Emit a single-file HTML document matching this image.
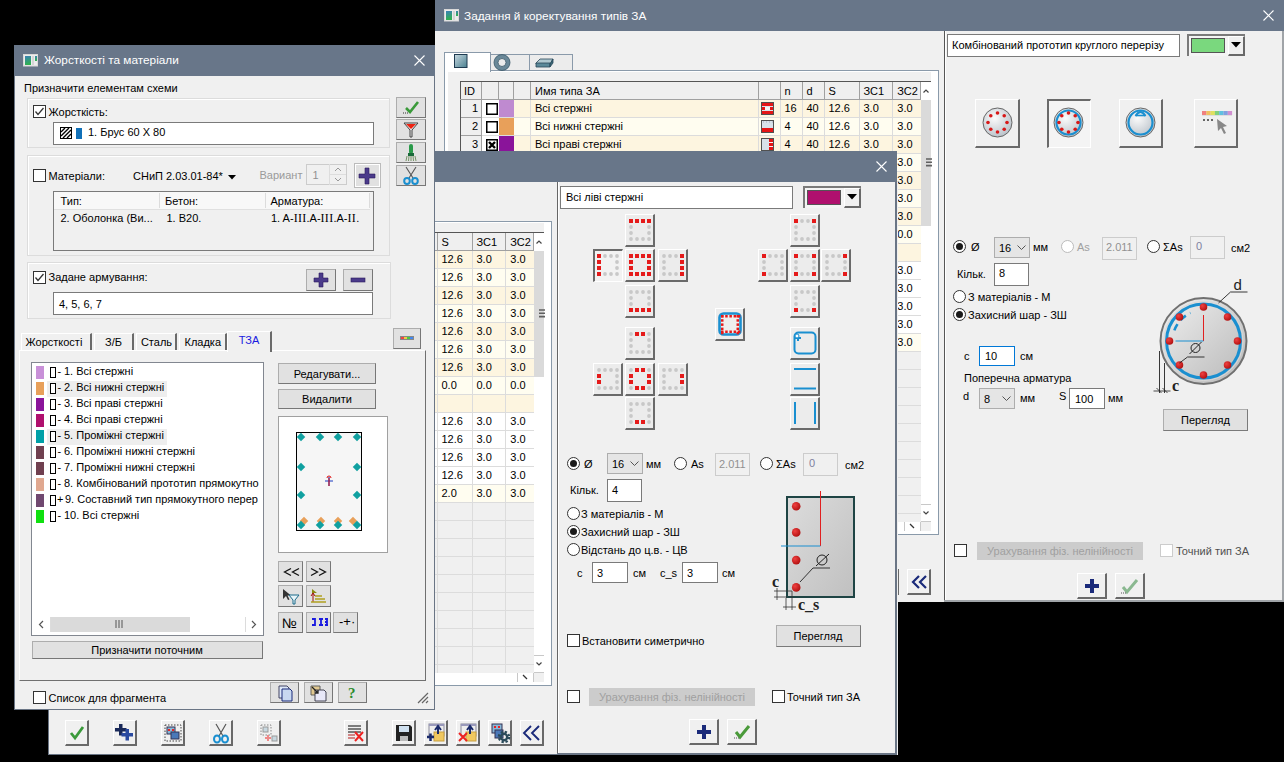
<!DOCTYPE html><html><head><meta charset="utf-8"><style>
html,body{margin:0;padding:0;}
body{width:1284px;height:762px;background:#000;position:relative;overflow:hidden;font-family:"Liberation Sans",sans-serif;}
div{position:absolute;box-sizing:content-box;}
.t{white-space:pre;}
svg{overflow:visible}
</style></head><body>
<div style="left:435px;top:0px;width:849px;height:602px;background:#f0f0f0"></div>
<div style="left:435px;top:0px;width:849px;height:31px;background:#687689"></div>
<svg style="position:absolute;left:444px;top:9px;" width="15" height="13" viewBox="0 0 15 13"><defs><linearGradient id="ig" x1="0" y1="0" x2="0.2" y2="1"><stop offset="0" stop-color="#3a80b8"/><stop offset="1" stop-color="#30b050"/></linearGradient></defs><rect x="0.5" y="0.5" width="14" height="11.5" fill="#ececec" stroke="#d8d8d8"/><rect x="2" y="2" width="6" height="9" fill="url(#ig)"/><rect x="9" y="2" width="2" height="9" fill="#d4d4d4"/><rect x="12" y="2" width="2" height="5" fill="url(#ig)"/></svg>
<div class="t" style="left:464px;top:10.81px;font-size:11.8px;line-height:11.8px;color:#fff;">Задання й коректування типів ЗА</div>
<svg style="position:absolute;left:1262.5px;top:10.0px;" width="11" height="11" viewBox="0 0 11 11"><path d="M0.5 0.5L10.5 10.5M10.5 0.5L0.5 10.5" stroke="#fff" stroke-width="1.1"/></svg>
<div style="left:490px;top:54px;width:38px;height:16px;background:#ececec;border:1px solid #8a9aaa;border-bottom:none"></div>
<div style="left:529px;top:54px;width:42px;height:16px;background:#ececec;border:1px solid #8a9aaa;border-bottom:none"></div>
<div style="left:444px;top:70px;width:493px;height:463px;background:#fff;border:1px solid #8a9aaa"></div>
<div style="left:444px;top:52px;width:45px;height:19px;background:#fff;border:1px solid #8a9aaa;border-bottom:none"></div>
<svg style="position:absolute;left:454px;top:54px;" width="14" height="14" viewBox="0 0 14 14"><defs><linearGradient id="tg1" x1="0" y1="0" x2="1" y2="1"><stop offset="0" stop-color="#c8d8e0"/><stop offset="1" stop-color="#4a8090"/></linearGradient></defs><rect x="0.5" y="0.5" width="12.5" height="13" fill="url(#tg1)" stroke="#1e3a50"/></svg>
<svg style="position:absolute;left:494px;top:54px;" width="17" height="17" viewBox="0 0 17 17"><circle cx="8" cy="8.5" r="6" fill="none" stroke="#6a8898" stroke-width="4"/><circle cx="8" cy="8.5" r="8" fill="none" stroke="#3a5868" stroke-width="0.8"/><circle cx="8" cy="8.5" r="4" fill="none" stroke="#3a5868" stroke-width="0.8"/></svg>
<svg style="position:absolute;left:535px;top:57px;" width="19" height="12" viewBox="0 0 19 12"><path d="M1 6L5 2H18L15 7H1Z" fill="#b0c8d0" stroke="#2a4858" stroke-width="0.8"/><path d="M1 6H15V10H1Z" fill="#5a8898" stroke="#2a4858" stroke-width="0.8"/><path d="M15 7L18 2V6L15 10Z" fill="#3a6878" stroke="#2a4858" stroke-width="0.8"/></svg>
<div style="left:448px;top:72px;width:483px;height:459px;background:#f0f0f0"></div>
<div style="left:460px;top:81px;width:471px;height:1px;background:#555"></div>
<div style="left:460px;top:81px;width:1px;height:441px;background:#555"></div>
<div style="left:461px;top:82px;width:20px;height:17px;background:#efefef;border-right:1px solid #a0a0a0"></div>
<div style="left:482px;top:82px;width:16px;height:17px;background:#efefef;border-right:1px solid #a0a0a0"></div>
<div style="left:499px;top:82px;width:14px;height:17px;background:#efefef;border-right:1px solid #a0a0a0"></div>
<div style="left:514px;top:82px;width:16px;height:17px;background:#efefef;border-right:1px solid #a0a0a0"></div>
<div style="left:531px;top:82px;width:227px;height:17px;background:#efefef;border-right:1px solid #a0a0a0"></div>
<div style="left:759px;top:82px;width:20.5px;height:17px;background:#efefef;border-right:1px solid #a0a0a0"></div>
<div style="left:780.5px;top:82px;width:21.0px;height:17px;background:#efefef;border-right:1px solid #a0a0a0"></div>
<div style="left:802.5px;top:82px;width:21.0px;height:17px;background:#efefef;border-right:1px solid #a0a0a0"></div>
<div style="left:824.5px;top:82px;width:34.0px;height:17px;background:#efefef;border-right:1px solid #a0a0a0"></div>
<div style="left:859.5px;top:82px;width:32.799999999999955px;height:17px;background:#efefef;border-right:1px solid #a0a0a0"></div>
<div style="left:893.3px;top:82px;width:27.100000000000023px;height:17px;background:#efefef;border-right:1px solid #a0a0a0"></div>
<div style="left:460px;top:99px;width:461.4px;height:1px;background:#a0a0a0"></div>
<div style="left:461px;top:100px;width:20px;height:17px;background:#efefef;border-right:1px solid #a0a0a0;border-bottom:1px solid #a0a0a0"></div>
<div style="left:482px;top:100px;width:17px;height:18px;background:#fff"></div>
<div style="left:499px;top:100px;width:15px;height:17px;background:#bf8ad0"></div>
<div style="left:514px;top:100px;width:407.4px;height:17px;background:#fdf5e0"></div>
<div style="left:482px;top:117px;width:439.4px;height:1px;background:#dcdcdc"></div>
<div style="left:530px;top:100px;width:1px;height:18px;background:#dcdcdc"></div>
<div style="left:758px;top:100px;width:1px;height:18px;background:#dcdcdc"></div>
<div style="left:779.5px;top:100px;width:1px;height:18px;background:#dcdcdc"></div>
<div style="left:801.5px;top:100px;width:1px;height:18px;background:#dcdcdc"></div>
<div style="left:823.5px;top:100px;width:1px;height:18px;background:#dcdcdc"></div>
<div style="left:858.5px;top:100px;width:1px;height:18px;background:#dcdcdc"></div>
<div style="left:892.3px;top:100px;width:1px;height:18px;background:#dcdcdc"></div>
<div class="t" style="left:278px;width:200px;text-align:right;top:102.89px;font-size:11px;line-height:11px;color:#000;">1</div>
<svg style="position:absolute;left:486px;top:103px;" width="12" height="12" viewBox="0 0 12 12"><rect x="0.75" y="0.75" width="10.5" height="10.5" fill="#fff" stroke="#000" stroke-width="1.5"/></svg>
<div class="t" style="left:535px;top:102.89px;font-size:11px;line-height:11px;color:#000;">Всі стержні</div>
<svg style="position:absolute;left:761px;top:102px;" width="13" height="13" viewBox="0 0 13 13"><rect x="0.5" y="0.5" width="12" height="12" fill="#d8e2ea" stroke="#505050"/><rect x="1" y="1" width="11" height="3" fill="#e51515"/><rect x="1" y="9" width="11" height="3" fill="#e51515"/><rect x="1" y="5" width="3" height="3" fill="#e51515"/><rect x="9" y="5" width="3" height="3" fill="#e51515"/><rect x="4" y="5" width="5" height="3" fill="#f4f4f4"/></svg>
<div class="t" style="left:784.5px;top:102.89px;font-size:11px;line-height:11px;color:#000;">16</div>
<div class="t" style="left:806.5px;top:102.89px;font-size:11px;line-height:11px;color:#000;">40</div>
<div class="t" style="left:828.5px;top:102.89px;font-size:11px;line-height:11px;color:#000;">12.6</div>
<div class="t" style="left:863.5px;top:102.89px;font-size:11px;line-height:11px;color:#000;">3.0</div>
<div class="t" style="left:897.3px;top:102.89px;font-size:11px;line-height:11px;color:#000;">3.0</div>
<div style="left:461px;top:118px;width:20px;height:17px;background:#efefef;border-right:1px solid #a0a0a0;border-bottom:1px solid #a0a0a0"></div>
<div style="left:482px;top:118px;width:17px;height:18px;background:#fff"></div>
<div style="left:499px;top:118px;width:15px;height:17px;background:#e8a05a"></div>
<div style="left:514px;top:118px;width:407.4px;height:17px;background:#fffdf0"></div>
<div style="left:482px;top:135px;width:439.4px;height:1px;background:#dcdcdc"></div>
<div style="left:530px;top:118px;width:1px;height:18px;background:#dcdcdc"></div>
<div style="left:758px;top:118px;width:1px;height:18px;background:#dcdcdc"></div>
<div style="left:779.5px;top:118px;width:1px;height:18px;background:#dcdcdc"></div>
<div style="left:801.5px;top:118px;width:1px;height:18px;background:#dcdcdc"></div>
<div style="left:823.5px;top:118px;width:1px;height:18px;background:#dcdcdc"></div>
<div style="left:858.5px;top:118px;width:1px;height:18px;background:#dcdcdc"></div>
<div style="left:892.3px;top:118px;width:1px;height:18px;background:#dcdcdc"></div>
<div class="t" style="left:278px;width:200px;text-align:right;top:120.89px;font-size:11px;line-height:11px;color:#000;">2</div>
<svg style="position:absolute;left:486px;top:121px;" width="12" height="12" viewBox="0 0 12 12"><rect x="0.75" y="0.75" width="10.5" height="10.5" fill="#fff" stroke="#000" stroke-width="1.5"/></svg>
<div class="t" style="left:535px;top:120.89px;font-size:11px;line-height:11px;color:#000;">Всі нижні стержні</div>
<svg style="position:absolute;left:761px;top:120px;" width="13" height="13" viewBox="0 0 13 13"><rect x="0.5" y="0.5" width="12" height="12" fill="#d8e2ea" stroke="#505050"/><rect x="1" y="8" width="11" height="4" fill="#e51515"/><path d="M2 2h1M5 2h1M8 2h1M11 2h1" stroke="#aab" stroke-width="1"/></svg>
<div class="t" style="left:784.5px;top:120.89px;font-size:11px;line-height:11px;color:#000;">4</div>
<div class="t" style="left:806.5px;top:120.89px;font-size:11px;line-height:11px;color:#000;">40</div>
<div class="t" style="left:828.5px;top:120.89px;font-size:11px;line-height:11px;color:#000;">12.6</div>
<div class="t" style="left:863.5px;top:120.89px;font-size:11px;line-height:11px;color:#000;">3.0</div>
<div class="t" style="left:897.3px;top:120.89px;font-size:11px;line-height:11px;color:#000;">3.0</div>
<div style="left:461px;top:136px;width:20px;height:17px;background:#efefef;border-right:1px solid #a0a0a0;border-bottom:1px solid #a0a0a0"></div>
<div style="left:482px;top:136px;width:17px;height:18px;background:#fff"></div>
<div style="left:499px;top:136px;width:15px;height:17px;background:#8a149a"></div>
<div style="left:514px;top:136px;width:407.4px;height:17px;background:#fdf5e0"></div>
<div style="left:482px;top:153px;width:439.4px;height:1px;background:#dcdcdc"></div>
<div style="left:530px;top:136px;width:1px;height:18px;background:#dcdcdc"></div>
<div style="left:758px;top:136px;width:1px;height:18px;background:#dcdcdc"></div>
<div style="left:779.5px;top:136px;width:1px;height:18px;background:#dcdcdc"></div>
<div style="left:801.5px;top:136px;width:1px;height:18px;background:#dcdcdc"></div>
<div style="left:823.5px;top:136px;width:1px;height:18px;background:#dcdcdc"></div>
<div style="left:858.5px;top:136px;width:1px;height:18px;background:#dcdcdc"></div>
<div style="left:892.3px;top:136px;width:1px;height:18px;background:#dcdcdc"></div>
<div class="t" style="left:278px;width:200px;text-align:right;top:138.89px;font-size:11px;line-height:11px;color:#000;">3</div>
<svg style="position:absolute;left:486px;top:139px;" width="12" height="12" viewBox="0 0 12 12"><rect x="0.75" y="0.75" width="10.5" height="10.5" fill="#fff" stroke="#000" stroke-width="1.5"/><path d="M3 3L9 9M9 3L3 9" stroke="#000" stroke-width="2.4"/></svg>
<div class="t" style="left:535px;top:138.89px;font-size:11px;line-height:11px;color:#000;">Всі праві стержні</div>
<svg style="position:absolute;left:761px;top:138px;" width="13" height="13" viewBox="0 0 13 13"><rect x="0.5" y="0.5" width="12" height="12" fill="#d8e2ea" stroke="#505050"/><rect x="8" y="1" width="4" height="11" fill="#e51515"/><rect x="8" y="4" width="4" height="1" fill="#f4f4f4"/><rect x="8" y="8" width="4" height="1" fill="#f4f4f4"/></svg>
<div class="t" style="left:784.5px;top:138.89px;font-size:11px;line-height:11px;color:#000;">4</div>
<div class="t" style="left:806.5px;top:138.89px;font-size:11px;line-height:11px;color:#000;">40</div>
<div class="t" style="left:828.5px;top:138.89px;font-size:11px;line-height:11px;color:#000;">12.6</div>
<div class="t" style="left:863.5px;top:138.89px;font-size:11px;line-height:11px;color:#000;">3.0</div>
<div class="t" style="left:897.3px;top:138.89px;font-size:11px;line-height:11px;color:#000;">3.0</div>
<div style="left:461px;top:154px;width:20px;height:17px;background:#efefef;border-right:1px solid #a0a0a0;border-bottom:1px solid #a0a0a0"></div>
<div style="left:482px;top:154px;width:17px;height:18px;background:#fff"></div>
<div style="left:499px;top:154px;width:15px;height:17px;background:#b0106e"></div>
<div style="left:514px;top:154px;width:407.4px;height:17px;background:#fffdf0"></div>
<div style="left:482px;top:171px;width:439.4px;height:1px;background:#dcdcdc"></div>
<div style="left:530px;top:154px;width:1px;height:18px;background:#dcdcdc"></div>
<div style="left:758px;top:154px;width:1px;height:18px;background:#dcdcdc"></div>
<div style="left:779.5px;top:154px;width:1px;height:18px;background:#dcdcdc"></div>
<div style="left:801.5px;top:154px;width:1px;height:18px;background:#dcdcdc"></div>
<div style="left:823.5px;top:154px;width:1px;height:18px;background:#dcdcdc"></div>
<div style="left:858.5px;top:154px;width:1px;height:18px;background:#dcdcdc"></div>
<div style="left:892.3px;top:154px;width:1px;height:18px;background:#dcdcdc"></div>
<div class="t" style="left:278px;width:200px;text-align:right;top:156.89px;font-size:11px;line-height:11px;color:#000;">4</div>
<svg style="position:absolute;left:486px;top:157px;" width="12" height="12" viewBox="0 0 12 12"><rect x="0.75" y="0.75" width="10.5" height="10.5" fill="#fff" stroke="#000" stroke-width="1.5"/></svg>
<div class="t" style="left:535px;top:156.89px;font-size:11px;line-height:11px;color:#000;">Всі ліві стержні</div>
<svg style="position:absolute;left:761px;top:156px;" width="13" height="13" viewBox="0 0 13 13"><rect x="0.5" y="0.5" width="12" height="12" fill="#d8e2ea" stroke="#505050"/><rect x="1" y="1" width="4" height="11" fill="#e51515"/></svg>
<div class="t" style="left:784.5px;top:156.89px;font-size:11px;line-height:11px;color:#000;">4</div>
<div class="t" style="left:806.5px;top:156.89px;font-size:11px;line-height:11px;color:#000;">40</div>
<div class="t" style="left:828.5px;top:156.89px;font-size:11px;line-height:11px;color:#000;">12.6</div>
<div class="t" style="left:863.5px;top:156.89px;font-size:11px;line-height:11px;color:#000;">3.0</div>
<div class="t" style="left:897.3px;top:156.89px;font-size:11px;line-height:11px;color:#000;">3.0</div>
<div style="left:461px;top:172px;width:20px;height:17px;background:#efefef;border-right:1px solid #a0a0a0;border-bottom:1px solid #a0a0a0"></div>
<div style="left:482px;top:172px;width:17px;height:18px;background:#fff"></div>
<div style="left:499px;top:172px;width:15px;height:17px;background:#00a0a0"></div>
<div style="left:514px;top:172px;width:407.4px;height:17px;background:#fdf5e0"></div>
<div style="left:482px;top:189px;width:439.4px;height:1px;background:#dcdcdc"></div>
<div style="left:530px;top:172px;width:1px;height:18px;background:#dcdcdc"></div>
<div style="left:758px;top:172px;width:1px;height:18px;background:#dcdcdc"></div>
<div style="left:779.5px;top:172px;width:1px;height:18px;background:#dcdcdc"></div>
<div style="left:801.5px;top:172px;width:1px;height:18px;background:#dcdcdc"></div>
<div style="left:823.5px;top:172px;width:1px;height:18px;background:#dcdcdc"></div>
<div style="left:858.5px;top:172px;width:1px;height:18px;background:#dcdcdc"></div>
<div style="left:892.3px;top:172px;width:1px;height:18px;background:#dcdcdc"></div>
<div class="t" style="left:278px;width:200px;text-align:right;top:174.89px;font-size:11px;line-height:11px;color:#000;">5</div>
<svg style="position:absolute;left:486px;top:175px;" width="12" height="12" viewBox="0 0 12 12"><rect x="0.75" y="0.75" width="10.5" height="10.5" fill="#fff" stroke="#000" stroke-width="1.5"/></svg>
<div class="t" style="left:535px;top:174.89px;font-size:11px;line-height:11px;color:#000;">Проміжні стержні</div>
<svg style="position:absolute;left:761px;top:174px;" width="13" height="13" viewBox="0 0 13 13"><rect x="0.5" y="0.5" width="12" height="12" fill="#d8e2ea" stroke="#505050"/><rect x="1" y="5" width="11" height="3" fill="#e51515"/></svg>
<div class="t" style="left:784.5px;top:174.89px;font-size:11px;line-height:11px;color:#000;">8</div>
<div class="t" style="left:806.5px;top:174.89px;font-size:11px;line-height:11px;color:#000;">40</div>
<div class="t" style="left:828.5px;top:174.89px;font-size:11px;line-height:11px;color:#000;">12.6</div>
<div class="t" style="left:863.5px;top:174.89px;font-size:11px;line-height:11px;color:#000;">3.0</div>
<div class="t" style="left:897.3px;top:174.89px;font-size:11px;line-height:11px;color:#000;">3.0</div>
<div style="left:461px;top:190px;width:20px;height:17px;background:#efefef;border-right:1px solid #a0a0a0;border-bottom:1px solid #a0a0a0"></div>
<div style="left:482px;top:190px;width:17px;height:18px;background:#fff"></div>
<div style="left:499px;top:190px;width:15px;height:17px;background:#703050"></div>
<div style="left:514px;top:190px;width:407.4px;height:17px;background:#fffdf0"></div>
<div style="left:482px;top:207px;width:439.4px;height:1px;background:#dcdcdc"></div>
<div style="left:530px;top:190px;width:1px;height:18px;background:#dcdcdc"></div>
<div style="left:758px;top:190px;width:1px;height:18px;background:#dcdcdc"></div>
<div style="left:779.5px;top:190px;width:1px;height:18px;background:#dcdcdc"></div>
<div style="left:801.5px;top:190px;width:1px;height:18px;background:#dcdcdc"></div>
<div style="left:823.5px;top:190px;width:1px;height:18px;background:#dcdcdc"></div>
<div style="left:858.5px;top:190px;width:1px;height:18px;background:#dcdcdc"></div>
<div style="left:892.3px;top:190px;width:1px;height:18px;background:#dcdcdc"></div>
<div class="t" style="left:278px;width:200px;text-align:right;top:192.89px;font-size:11px;line-height:11px;color:#000;">6</div>
<svg style="position:absolute;left:486px;top:193px;" width="12" height="12" viewBox="0 0 12 12"><rect x="0.75" y="0.75" width="10.5" height="10.5" fill="#fff" stroke="#000" stroke-width="1.5"/></svg>
<div class="t" style="left:535px;top:192.89px;font-size:11px;line-height:11px;color:#000;">Проміжні нижні стержні</div>
<svg style="position:absolute;left:761px;top:192px;" width="13" height="13" viewBox="0 0 13 13"><rect x="0.5" y="0.5" width="12" height="12" fill="#d8e2ea" stroke="#505050"/><rect x="1" y="8" width="11" height="4" fill="#e51515"/><path d="M2 2h1M5 2h1M8 2h1M11 2h1" stroke="#aab" stroke-width="1"/></svg>
<div class="t" style="left:784.5px;top:192.89px;font-size:11px;line-height:11px;color:#000;">2</div>
<div class="t" style="left:806.5px;top:192.89px;font-size:11px;line-height:11px;color:#000;">40</div>
<div class="t" style="left:828.5px;top:192.89px;font-size:11px;line-height:11px;color:#000;">12.6</div>
<div class="t" style="left:863.5px;top:192.89px;font-size:11px;line-height:11px;color:#000;">3.0</div>
<div class="t" style="left:897.3px;top:192.89px;font-size:11px;line-height:11px;color:#000;">3.0</div>
<div style="left:461px;top:208px;width:20px;height:17px;background:#efefef;border-right:1px solid #a0a0a0;border-bottom:1px solid #a0a0a0"></div>
<div style="left:482px;top:208px;width:17px;height:18px;background:#fff"></div>
<div style="left:499px;top:208px;width:15px;height:17px;background:#703050"></div>
<div style="left:514px;top:208px;width:407.4px;height:17px;background:#fdf5e0"></div>
<div style="left:482px;top:225px;width:439.4px;height:1px;background:#dcdcdc"></div>
<div style="left:530px;top:208px;width:1px;height:18px;background:#dcdcdc"></div>
<div style="left:758px;top:208px;width:1px;height:18px;background:#dcdcdc"></div>
<div style="left:779.5px;top:208px;width:1px;height:18px;background:#dcdcdc"></div>
<div style="left:801.5px;top:208px;width:1px;height:18px;background:#dcdcdc"></div>
<div style="left:823.5px;top:208px;width:1px;height:18px;background:#dcdcdc"></div>
<div style="left:858.5px;top:208px;width:1px;height:18px;background:#dcdcdc"></div>
<div style="left:892.3px;top:208px;width:1px;height:18px;background:#dcdcdc"></div>
<div class="t" style="left:278px;width:200px;text-align:right;top:210.89px;font-size:11px;line-height:11px;color:#000;">7</div>
<svg style="position:absolute;left:486px;top:211px;" width="12" height="12" viewBox="0 0 12 12"><rect x="0.75" y="0.75" width="10.5" height="10.5" fill="#fff" stroke="#000" stroke-width="1.5"/></svg>
<div class="t" style="left:535px;top:210.89px;font-size:11px;line-height:11px;color:#000;">Проміжні нижні стержні</div>
<svg style="position:absolute;left:761px;top:210px;" width="13" height="13" viewBox="0 0 13 13"><rect x="0.5" y="0.5" width="12" height="12" fill="#d8e2ea" stroke="#505050"/><rect x="1" y="8" width="11" height="4" fill="#e51515"/><path d="M2 2h1M5 2h1M8 2h1M11 2h1" stroke="#aab" stroke-width="1"/></svg>
<div class="t" style="left:784.5px;top:210.89px;font-size:11px;line-height:11px;color:#000;">2</div>
<div class="t" style="left:806.5px;top:210.89px;font-size:11px;line-height:11px;color:#000;">40</div>
<div class="t" style="left:828.5px;top:210.89px;font-size:11px;line-height:11px;color:#000;">12.6</div>
<div class="t" style="left:863.5px;top:210.89px;font-size:11px;line-height:11px;color:#000;">3.0</div>
<div class="t" style="left:897.3px;top:210.89px;font-size:11px;line-height:11px;color:#000;">3.0</div>
<div style="left:461px;top:226px;width:20px;height:17px;background:#efefef;border-right:1px solid #a0a0a0;border-bottom:1px solid #a0a0a0"></div>
<div style="left:482px;top:226px;width:17px;height:18px;background:#fff"></div>
<div style="left:499px;top:226px;width:15px;height:17px;background:#e0a890"></div>
<div style="left:514px;top:226px;width:407.4px;height:17px;background:#fffdf0"></div>
<div style="left:482px;top:243px;width:439.4px;height:1px;background:#dcdcdc"></div>
<div style="left:530px;top:226px;width:1px;height:18px;background:#dcdcdc"></div>
<div style="left:758px;top:226px;width:1px;height:18px;background:#dcdcdc"></div>
<div style="left:779.5px;top:226px;width:1px;height:18px;background:#dcdcdc"></div>
<div style="left:801.5px;top:226px;width:1px;height:18px;background:#dcdcdc"></div>
<div style="left:823.5px;top:226px;width:1px;height:18px;background:#dcdcdc"></div>
<div style="left:858.5px;top:226px;width:1px;height:18px;background:#dcdcdc"></div>
<div style="left:892.3px;top:226px;width:1px;height:18px;background:#dcdcdc"></div>
<div class="t" style="left:278px;width:200px;text-align:right;top:228.89px;font-size:11px;line-height:11px;color:#000;">8</div>
<svg style="position:absolute;left:486px;top:229px;" width="12" height="12" viewBox="0 0 12 12"><rect x="0.75" y="0.75" width="10.5" height="10.5" fill="#fff" stroke="#000" stroke-width="1.5"/></svg>
<div class="t" style="left:535px;top:228.89px;font-size:11px;line-height:11px;color:#000;">Комбінований прототип</div>
<svg style="position:absolute;left:761px;top:228px;" width="13" height="13" viewBox="0 0 13 13"><rect x="0.5" y="0.5" width="12" height="12" fill="#d8e2ea" stroke="#505050"/><rect x="1" y="1" width="11" height="3" fill="#e51515"/><rect x="1" y="9" width="11" height="3" fill="#e51515"/><rect x="1" y="5" width="3" height="3" fill="#e51515"/><rect x="9" y="5" width="3" height="3" fill="#e51515"/><rect x="4" y="5" width="5" height="3" fill="#f4f4f4"/></svg>
<div class="t" style="left:784.5px;top:228.89px;font-size:11px;line-height:11px;color:#000;">0</div>
<div class="t" style="left:806.5px;top:228.89px;font-size:11px;line-height:11px;color:#000;">0</div>
<div class="t" style="left:828.5px;top:228.89px;font-size:11px;line-height:11px;color:#000;">0.0</div>
<div class="t" style="left:863.5px;top:228.89px;font-size:11px;line-height:11px;color:#000;">0.0</div>
<div class="t" style="left:897.3px;top:228.89px;font-size:11px;line-height:11px;color:#000;">0.0</div>
<div style="left:461px;top:244px;width:20px;height:17px;background:#efefef;border-right:1px solid #a0a0a0;border-bottom:1px solid #a0a0a0"></div>
<div style="left:482px;top:244px;width:17px;height:18px;background:#fff"></div>
<div style="left:499px;top:244px;width:15px;height:17px;background:#704870"></div>
<div style="left:514px;top:244px;width:407.4px;height:17px;background:#fdf5e0"></div>
<div style="left:482px;top:261px;width:439.4px;height:1px;background:#dcdcdc"></div>
<div style="left:530px;top:244px;width:1px;height:18px;background:#dcdcdc"></div>
<div style="left:758px;top:244px;width:1px;height:18px;background:#dcdcdc"></div>
<div style="left:779.5px;top:244px;width:1px;height:18px;background:#dcdcdc"></div>
<div style="left:801.5px;top:244px;width:1px;height:18px;background:#dcdcdc"></div>
<div style="left:823.5px;top:244px;width:1px;height:18px;background:#dcdcdc"></div>
<div style="left:858.5px;top:244px;width:1px;height:18px;background:#dcdcdc"></div>
<div style="left:892.3px;top:244px;width:1px;height:18px;background:#dcdcdc"></div>
<div class="t" style="left:278px;width:200px;text-align:right;top:246.89px;font-size:11px;line-height:11px;color:#000;">9</div>
<svg style="position:absolute;left:486px;top:247px;" width="12" height="12" viewBox="0 0 12 12"><rect x="0.75" y="0.75" width="10.5" height="10.5" fill="#fff" stroke="#000" stroke-width="1.5"/></svg>
<div class="t" style="left:535px;top:246.89px;font-size:11px;line-height:11px;color:#000;">Составний тип</div>
<div class="t" style="left:784.5px;top:246.89px;font-size:11px;line-height:11px;color:#000;"></div>
<div class="t" style="left:806.5px;top:246.89px;font-size:11px;line-height:11px;color:#000;"></div>
<div class="t" style="left:828.5px;top:246.89px;font-size:11px;line-height:11px;color:#000;"></div>
<div class="t" style="left:863.5px;top:246.89px;font-size:11px;line-height:11px;color:#000;"></div>
<div class="t" style="left:897.3px;top:246.89px;font-size:11px;line-height:11px;color:#000;"></div>
<div style="left:461px;top:262px;width:20px;height:17px;background:#efefef;border-right:1px solid #a0a0a0;border-bottom:1px solid #a0a0a0"></div>
<div style="left:482px;top:262px;width:17px;height:18px;background:#fff"></div>
<div style="left:499px;top:262px;width:15px;height:17px;background:#10e010"></div>
<div style="left:514px;top:262px;width:407.4px;height:17px;background:#ffffff"></div>
<div style="left:482px;top:279px;width:439.4px;height:1px;background:#dcdcdc"></div>
<div style="left:530px;top:262px;width:1px;height:18px;background:#dcdcdc"></div>
<div style="left:758px;top:262px;width:1px;height:18px;background:#dcdcdc"></div>
<div style="left:779.5px;top:262px;width:1px;height:18px;background:#dcdcdc"></div>
<div style="left:801.5px;top:262px;width:1px;height:18px;background:#dcdcdc"></div>
<div style="left:823.5px;top:262px;width:1px;height:18px;background:#dcdcdc"></div>
<div style="left:858.5px;top:262px;width:1px;height:18px;background:#dcdcdc"></div>
<div style="left:892.3px;top:262px;width:1px;height:18px;background:#dcdcdc"></div>
<div class="t" style="left:278px;width:200px;text-align:right;top:264.89px;font-size:11px;line-height:11px;color:#000;">10</div>
<svg style="position:absolute;left:486px;top:265px;" width="12" height="12" viewBox="0 0 12 12"><rect x="0.75" y="0.75" width="10.5" height="10.5" fill="#fff" stroke="#000" stroke-width="1.5"/></svg>
<div class="t" style="left:535px;top:264.89px;font-size:11px;line-height:11px;color:#000;">Всі стержні</div>
<svg style="position:absolute;left:761px;top:264px;" width="13" height="13" viewBox="0 0 13 13"><rect x="0.5" y="0.5" width="12" height="12" fill="#d8e2ea" stroke="#505050"/><rect x="1" y="1" width="11" height="3" fill="#e51515"/><rect x="1" y="9" width="11" height="3" fill="#e51515"/><rect x="1" y="5" width="3" height="3" fill="#e51515"/><rect x="9" y="5" width="3" height="3" fill="#e51515"/><rect x="4" y="5" width="5" height="3" fill="#f4f4f4"/></svg>
<div class="t" style="left:784.5px;top:264.89px;font-size:11px;line-height:11px;color:#000;">4</div>
<div class="t" style="left:806.5px;top:264.89px;font-size:11px;line-height:11px;color:#000;">40</div>
<div class="t" style="left:828.5px;top:264.89px;font-size:11px;line-height:11px;color:#000;">12.6</div>
<div class="t" style="left:863.5px;top:264.89px;font-size:11px;line-height:11px;color:#000;">3.0</div>
<div class="t" style="left:897.3px;top:264.89px;font-size:11px;line-height:11px;color:#000;">3.0</div>
<div style="left:461px;top:280px;width:20px;height:17px;background:#efefef;border-right:1px solid #a0a0a0;border-bottom:1px solid #a0a0a0"></div>
<div style="left:482px;top:280px;width:17px;height:18px;background:#fff"></div>
<div style="left:499px;top:280px;width:15px;height:17px;background:#10e010"></div>
<div style="left:514px;top:280px;width:407.4px;height:17px;background:#ffffff"></div>
<div style="left:482px;top:297px;width:439.4px;height:1px;background:#dcdcdc"></div>
<div style="left:530px;top:280px;width:1px;height:18px;background:#dcdcdc"></div>
<div style="left:758px;top:280px;width:1px;height:18px;background:#dcdcdc"></div>
<div style="left:779.5px;top:280px;width:1px;height:18px;background:#dcdcdc"></div>
<div style="left:801.5px;top:280px;width:1px;height:18px;background:#dcdcdc"></div>
<div style="left:823.5px;top:280px;width:1px;height:18px;background:#dcdcdc"></div>
<div style="left:858.5px;top:280px;width:1px;height:18px;background:#dcdcdc"></div>
<div style="left:892.3px;top:280px;width:1px;height:18px;background:#dcdcdc"></div>
<div class="t" style="left:278px;width:200px;text-align:right;top:282.89px;font-size:11px;line-height:11px;color:#000;">11</div>
<svg style="position:absolute;left:486px;top:283px;" width="12" height="12" viewBox="0 0 12 12"><rect x="0.75" y="0.75" width="10.5" height="10.5" fill="#fff" stroke="#000" stroke-width="1.5"/></svg>
<div class="t" style="left:535px;top:282.89px;font-size:11px;line-height:11px;color:#000;">Всі стержні</div>
<svg style="position:absolute;left:761px;top:282px;" width="13" height="13" viewBox="0 0 13 13"><rect x="0.5" y="0.5" width="12" height="12" fill="#d8e2ea" stroke="#505050"/><rect x="1" y="1" width="11" height="3" fill="#e51515"/><rect x="1" y="9" width="11" height="3" fill="#e51515"/><rect x="1" y="5" width="3" height="3" fill="#e51515"/><rect x="9" y="5" width="3" height="3" fill="#e51515"/><rect x="4" y="5" width="5" height="3" fill="#f4f4f4"/></svg>
<div class="t" style="left:784.5px;top:282.89px;font-size:11px;line-height:11px;color:#000;">4</div>
<div class="t" style="left:806.5px;top:282.89px;font-size:11px;line-height:11px;color:#000;">40</div>
<div class="t" style="left:828.5px;top:282.89px;font-size:11px;line-height:11px;color:#000;">12.6</div>
<div class="t" style="left:863.5px;top:282.89px;font-size:11px;line-height:11px;color:#000;">3.0</div>
<div class="t" style="left:897.3px;top:282.89px;font-size:11px;line-height:11px;color:#000;">3.0</div>
<div style="left:461px;top:298px;width:20px;height:17px;background:#efefef;border-right:1px solid #a0a0a0;border-bottom:1px solid #a0a0a0"></div>
<div style="left:482px;top:298px;width:17px;height:18px;background:#fff"></div>
<div style="left:499px;top:298px;width:15px;height:17px;background:#10e010"></div>
<div style="left:514px;top:298px;width:407.4px;height:17px;background:#ffffff"></div>
<div style="left:482px;top:315px;width:439.4px;height:1px;background:#dcdcdc"></div>
<div style="left:530px;top:298px;width:1px;height:18px;background:#dcdcdc"></div>
<div style="left:758px;top:298px;width:1px;height:18px;background:#dcdcdc"></div>
<div style="left:779.5px;top:298px;width:1px;height:18px;background:#dcdcdc"></div>
<div style="left:801.5px;top:298px;width:1px;height:18px;background:#dcdcdc"></div>
<div style="left:823.5px;top:298px;width:1px;height:18px;background:#dcdcdc"></div>
<div style="left:858.5px;top:298px;width:1px;height:18px;background:#dcdcdc"></div>
<div style="left:892.3px;top:298px;width:1px;height:18px;background:#dcdcdc"></div>
<div class="t" style="left:278px;width:200px;text-align:right;top:300.89px;font-size:11px;line-height:11px;color:#000;">12</div>
<svg style="position:absolute;left:486px;top:301px;" width="12" height="12" viewBox="0 0 12 12"><rect x="0.75" y="0.75" width="10.5" height="10.5" fill="#fff" stroke="#000" stroke-width="1.5"/></svg>
<div class="t" style="left:535px;top:300.89px;font-size:11px;line-height:11px;color:#000;">Всі стержні</div>
<svg style="position:absolute;left:761px;top:300px;" width="13" height="13" viewBox="0 0 13 13"><rect x="0.5" y="0.5" width="12" height="12" fill="#d8e2ea" stroke="#505050"/><rect x="1" y="1" width="11" height="3" fill="#e51515"/><rect x="1" y="9" width="11" height="3" fill="#e51515"/><rect x="1" y="5" width="3" height="3" fill="#e51515"/><rect x="9" y="5" width="3" height="3" fill="#e51515"/><rect x="4" y="5" width="5" height="3" fill="#f4f4f4"/></svg>
<div class="t" style="left:784.5px;top:300.89px;font-size:11px;line-height:11px;color:#000;">4</div>
<div class="t" style="left:806.5px;top:300.89px;font-size:11px;line-height:11px;color:#000;">40</div>
<div class="t" style="left:828.5px;top:300.89px;font-size:11px;line-height:11px;color:#000;">12.6</div>
<div class="t" style="left:863.5px;top:300.89px;font-size:11px;line-height:11px;color:#000;">3.0</div>
<div class="t" style="left:897.3px;top:300.89px;font-size:11px;line-height:11px;color:#000;">3.0</div>
<div style="left:461px;top:316px;width:20px;height:17px;background:#efefef;border-right:1px solid #a0a0a0;border-bottom:1px solid #a0a0a0"></div>
<div style="left:482px;top:316px;width:17px;height:18px;background:#fff"></div>
<div style="left:499px;top:316px;width:15px;height:17px;background:#10e010"></div>
<div style="left:514px;top:316px;width:407.4px;height:17px;background:#ffffff"></div>
<div style="left:482px;top:333px;width:439.4px;height:1px;background:#dcdcdc"></div>
<div style="left:530px;top:316px;width:1px;height:18px;background:#dcdcdc"></div>
<div style="left:758px;top:316px;width:1px;height:18px;background:#dcdcdc"></div>
<div style="left:779.5px;top:316px;width:1px;height:18px;background:#dcdcdc"></div>
<div style="left:801.5px;top:316px;width:1px;height:18px;background:#dcdcdc"></div>
<div style="left:823.5px;top:316px;width:1px;height:18px;background:#dcdcdc"></div>
<div style="left:858.5px;top:316px;width:1px;height:18px;background:#dcdcdc"></div>
<div style="left:892.3px;top:316px;width:1px;height:18px;background:#dcdcdc"></div>
<div class="t" style="left:278px;width:200px;text-align:right;top:318.89px;font-size:11px;line-height:11px;color:#000;">13</div>
<svg style="position:absolute;left:486px;top:319px;" width="12" height="12" viewBox="0 0 12 12"><rect x="0.75" y="0.75" width="10.5" height="10.5" fill="#fff" stroke="#000" stroke-width="1.5"/></svg>
<div class="t" style="left:535px;top:318.89px;font-size:11px;line-height:11px;color:#000;">Всі стержні</div>
<svg style="position:absolute;left:761px;top:318px;" width="13" height="13" viewBox="0 0 13 13"><rect x="0.5" y="0.5" width="12" height="12" fill="#d8e2ea" stroke="#505050"/><rect x="1" y="1" width="11" height="3" fill="#e51515"/><rect x="1" y="9" width="11" height="3" fill="#e51515"/><rect x="1" y="5" width="3" height="3" fill="#e51515"/><rect x="9" y="5" width="3" height="3" fill="#e51515"/><rect x="4" y="5" width="5" height="3" fill="#f4f4f4"/></svg>
<div class="t" style="left:784.5px;top:318.89px;font-size:11px;line-height:11px;color:#000;">4</div>
<div class="t" style="left:806.5px;top:318.89px;font-size:11px;line-height:11px;color:#000;">40</div>
<div class="t" style="left:828.5px;top:318.89px;font-size:11px;line-height:11px;color:#000;">12.6</div>
<div class="t" style="left:863.5px;top:318.89px;font-size:11px;line-height:11px;color:#000;">3.0</div>
<div class="t" style="left:897.3px;top:318.89px;font-size:11px;line-height:11px;color:#000;">3.0</div>
<div style="left:461px;top:334px;width:20px;height:17px;background:#efefef;border-right:1px solid #a0a0a0;border-bottom:1px solid #a0a0a0"></div>
<div style="left:482px;top:334px;width:17px;height:18px;background:#fff"></div>
<div style="left:499px;top:334px;width:15px;height:17px;background:#10e010"></div>
<div style="left:514px;top:334px;width:407.4px;height:17px;background:#fffdf0"></div>
<div style="left:482px;top:351px;width:439.4px;height:1px;background:#dcdcdc"></div>
<div style="left:530px;top:334px;width:1px;height:18px;background:#dcdcdc"></div>
<div style="left:758px;top:334px;width:1px;height:18px;background:#dcdcdc"></div>
<div style="left:779.5px;top:334px;width:1px;height:18px;background:#dcdcdc"></div>
<div style="left:801.5px;top:334px;width:1px;height:18px;background:#dcdcdc"></div>
<div style="left:823.5px;top:334px;width:1px;height:18px;background:#dcdcdc"></div>
<div style="left:858.5px;top:334px;width:1px;height:18px;background:#dcdcdc"></div>
<div style="left:892.3px;top:334px;width:1px;height:18px;background:#dcdcdc"></div>
<div class="t" style="left:278px;width:200px;text-align:right;top:336.89px;font-size:11px;line-height:11px;color:#000;">14</div>
<svg style="position:absolute;left:486px;top:337px;" width="12" height="12" viewBox="0 0 12 12"><rect x="0.75" y="0.75" width="10.5" height="10.5" fill="#fff" stroke="#000" stroke-width="1.5"/></svg>
<div class="t" style="left:535px;top:336.89px;font-size:11px;line-height:11px;color:#000;">Всі стержні</div>
<svg style="position:absolute;left:761px;top:336px;" width="13" height="13" viewBox="0 0 13 13"><rect x="0.5" y="0.5" width="12" height="12" fill="#d8e2ea" stroke="#505050"/><rect x="1" y="1" width="11" height="3" fill="#e51515"/><rect x="1" y="9" width="11" height="3" fill="#e51515"/><rect x="1" y="5" width="3" height="3" fill="#e51515"/><rect x="9" y="5" width="3" height="3" fill="#e51515"/><rect x="4" y="5" width="5" height="3" fill="#f4f4f4"/></svg>
<div class="t" style="left:784.5px;top:336.89px;font-size:11px;line-height:11px;color:#000;">4</div>
<div class="t" style="left:806.5px;top:336.89px;font-size:11px;line-height:11px;color:#000;">40</div>
<div class="t" style="left:828.5px;top:336.89px;font-size:11px;line-height:11px;color:#000;">2.0</div>
<div class="t" style="left:863.5px;top:336.89px;font-size:11px;line-height:11px;color:#000;">3.0</div>
<div class="t" style="left:897.3px;top:336.89px;font-size:11px;line-height:11px;color:#000;">3.0</div>
<div style="left:482px;top:352px;width:439.4px;height:18px;background:#f0f0f0"></div>
<div style="left:482px;top:369px;width:439.4px;height:1px;background:#dcdcdc"></div>
<div style="left:530px;top:352px;width:1px;height:18px;background:#dcdcdc"></div>
<div style="left:758px;top:352px;width:1px;height:18px;background:#dcdcdc"></div>
<div style="left:779.5px;top:352px;width:1px;height:18px;background:#dcdcdc"></div>
<div style="left:801.5px;top:352px;width:1px;height:18px;background:#dcdcdc"></div>
<div style="left:823.5px;top:352px;width:1px;height:18px;background:#dcdcdc"></div>
<div style="left:858.5px;top:352px;width:1px;height:18px;background:#dcdcdc"></div>
<div style="left:892.3px;top:352px;width:1px;height:18px;background:#dcdcdc"></div>
<div style="left:461px;top:352px;width:20px;height:17px;background:#f0f0f0;border-right:1px solid #dcdcdc"></div>
<div style="left:482px;top:370px;width:439.4px;height:18px;background:#f0f0f0"></div>
<div style="left:482px;top:387px;width:439.4px;height:1px;background:#dcdcdc"></div>
<div style="left:530px;top:370px;width:1px;height:18px;background:#dcdcdc"></div>
<div style="left:758px;top:370px;width:1px;height:18px;background:#dcdcdc"></div>
<div style="left:779.5px;top:370px;width:1px;height:18px;background:#dcdcdc"></div>
<div style="left:801.5px;top:370px;width:1px;height:18px;background:#dcdcdc"></div>
<div style="left:823.5px;top:370px;width:1px;height:18px;background:#dcdcdc"></div>
<div style="left:858.5px;top:370px;width:1px;height:18px;background:#dcdcdc"></div>
<div style="left:892.3px;top:370px;width:1px;height:18px;background:#dcdcdc"></div>
<div style="left:461px;top:370px;width:20px;height:17px;background:#f0f0f0;border-right:1px solid #dcdcdc"></div>
<div style="left:482px;top:388px;width:439.4px;height:18px;background:#f0f0f0"></div>
<div style="left:482px;top:405px;width:439.4px;height:1px;background:#dcdcdc"></div>
<div style="left:530px;top:388px;width:1px;height:18px;background:#dcdcdc"></div>
<div style="left:758px;top:388px;width:1px;height:18px;background:#dcdcdc"></div>
<div style="left:779.5px;top:388px;width:1px;height:18px;background:#dcdcdc"></div>
<div style="left:801.5px;top:388px;width:1px;height:18px;background:#dcdcdc"></div>
<div style="left:823.5px;top:388px;width:1px;height:18px;background:#dcdcdc"></div>
<div style="left:858.5px;top:388px;width:1px;height:18px;background:#dcdcdc"></div>
<div style="left:892.3px;top:388px;width:1px;height:18px;background:#dcdcdc"></div>
<div style="left:461px;top:388px;width:20px;height:17px;background:#f0f0f0;border-right:1px solid #dcdcdc"></div>
<div style="left:482px;top:406px;width:439.4px;height:18px;background:#f0f0f0"></div>
<div style="left:482px;top:423px;width:439.4px;height:1px;background:#dcdcdc"></div>
<div style="left:530px;top:406px;width:1px;height:18px;background:#dcdcdc"></div>
<div style="left:758px;top:406px;width:1px;height:18px;background:#dcdcdc"></div>
<div style="left:779.5px;top:406px;width:1px;height:18px;background:#dcdcdc"></div>
<div style="left:801.5px;top:406px;width:1px;height:18px;background:#dcdcdc"></div>
<div style="left:823.5px;top:406px;width:1px;height:18px;background:#dcdcdc"></div>
<div style="left:858.5px;top:406px;width:1px;height:18px;background:#dcdcdc"></div>
<div style="left:892.3px;top:406px;width:1px;height:18px;background:#dcdcdc"></div>
<div style="left:461px;top:406px;width:20px;height:17px;background:#f0f0f0;border-right:1px solid #dcdcdc"></div>
<div style="left:482px;top:424px;width:439.4px;height:18px;background:#f0f0f0"></div>
<div style="left:482px;top:441px;width:439.4px;height:1px;background:#dcdcdc"></div>
<div style="left:530px;top:424px;width:1px;height:18px;background:#dcdcdc"></div>
<div style="left:758px;top:424px;width:1px;height:18px;background:#dcdcdc"></div>
<div style="left:779.5px;top:424px;width:1px;height:18px;background:#dcdcdc"></div>
<div style="left:801.5px;top:424px;width:1px;height:18px;background:#dcdcdc"></div>
<div style="left:823.5px;top:424px;width:1px;height:18px;background:#dcdcdc"></div>
<div style="left:858.5px;top:424px;width:1px;height:18px;background:#dcdcdc"></div>
<div style="left:892.3px;top:424px;width:1px;height:18px;background:#dcdcdc"></div>
<div style="left:461px;top:424px;width:20px;height:17px;background:#f0f0f0;border-right:1px solid #dcdcdc"></div>
<div style="left:482px;top:442px;width:439.4px;height:18px;background:#f0f0f0"></div>
<div style="left:482px;top:459px;width:439.4px;height:1px;background:#dcdcdc"></div>
<div style="left:530px;top:442px;width:1px;height:18px;background:#dcdcdc"></div>
<div style="left:758px;top:442px;width:1px;height:18px;background:#dcdcdc"></div>
<div style="left:779.5px;top:442px;width:1px;height:18px;background:#dcdcdc"></div>
<div style="left:801.5px;top:442px;width:1px;height:18px;background:#dcdcdc"></div>
<div style="left:823.5px;top:442px;width:1px;height:18px;background:#dcdcdc"></div>
<div style="left:858.5px;top:442px;width:1px;height:18px;background:#dcdcdc"></div>
<div style="left:892.3px;top:442px;width:1px;height:18px;background:#dcdcdc"></div>
<div style="left:461px;top:442px;width:20px;height:17px;background:#f0f0f0;border-right:1px solid #dcdcdc"></div>
<div style="left:482px;top:460px;width:439.4px;height:18px;background:#f0f0f0"></div>
<div style="left:482px;top:477px;width:439.4px;height:1px;background:#dcdcdc"></div>
<div style="left:530px;top:460px;width:1px;height:18px;background:#dcdcdc"></div>
<div style="left:758px;top:460px;width:1px;height:18px;background:#dcdcdc"></div>
<div style="left:779.5px;top:460px;width:1px;height:18px;background:#dcdcdc"></div>
<div style="left:801.5px;top:460px;width:1px;height:18px;background:#dcdcdc"></div>
<div style="left:823.5px;top:460px;width:1px;height:18px;background:#dcdcdc"></div>
<div style="left:858.5px;top:460px;width:1px;height:18px;background:#dcdcdc"></div>
<div style="left:892.3px;top:460px;width:1px;height:18px;background:#dcdcdc"></div>
<div style="left:461px;top:460px;width:20px;height:17px;background:#f0f0f0;border-right:1px solid #dcdcdc"></div>
<div style="left:482px;top:478px;width:439.4px;height:18px;background:#f0f0f0"></div>
<div style="left:482px;top:495px;width:439.4px;height:1px;background:#dcdcdc"></div>
<div style="left:530px;top:478px;width:1px;height:18px;background:#dcdcdc"></div>
<div style="left:758px;top:478px;width:1px;height:18px;background:#dcdcdc"></div>
<div style="left:779.5px;top:478px;width:1px;height:18px;background:#dcdcdc"></div>
<div style="left:801.5px;top:478px;width:1px;height:18px;background:#dcdcdc"></div>
<div style="left:823.5px;top:478px;width:1px;height:18px;background:#dcdcdc"></div>
<div style="left:858.5px;top:478px;width:1px;height:18px;background:#dcdcdc"></div>
<div style="left:892.3px;top:478px;width:1px;height:18px;background:#dcdcdc"></div>
<div style="left:461px;top:478px;width:20px;height:17px;background:#f0f0f0;border-right:1px solid #dcdcdc"></div>
<div style="left:482px;top:496px;width:439.4px;height:18px;background:#f0f0f0"></div>
<div style="left:482px;top:513px;width:439.4px;height:1px;background:#dcdcdc"></div>
<div style="left:530px;top:496px;width:1px;height:18px;background:#dcdcdc"></div>
<div style="left:758px;top:496px;width:1px;height:18px;background:#dcdcdc"></div>
<div style="left:779.5px;top:496px;width:1px;height:18px;background:#dcdcdc"></div>
<div style="left:801.5px;top:496px;width:1px;height:18px;background:#dcdcdc"></div>
<div style="left:823.5px;top:496px;width:1px;height:18px;background:#dcdcdc"></div>
<div style="left:858.5px;top:496px;width:1px;height:18px;background:#dcdcdc"></div>
<div style="left:892.3px;top:496px;width:1px;height:18px;background:#dcdcdc"></div>
<div style="left:461px;top:496px;width:20px;height:17px;background:#f0f0f0;border-right:1px solid #dcdcdc"></div>
<div style="left:482px;top:514px;width:439.4px;height:8px;background:#f0f0f0"></div>
<div style="left:530px;top:514px;width:1px;height:8px;background:#dcdcdc"></div>
<div style="left:758px;top:514px;width:1px;height:8px;background:#dcdcdc"></div>
<div style="left:779.5px;top:514px;width:1px;height:8px;background:#dcdcdc"></div>
<div style="left:801.5px;top:514px;width:1px;height:8px;background:#dcdcdc"></div>
<div style="left:823.5px;top:514px;width:1px;height:8px;background:#dcdcdc"></div>
<div style="left:858.5px;top:514px;width:1px;height:8px;background:#dcdcdc"></div>
<div style="left:892.3px;top:514px;width:1px;height:8px;background:#dcdcdc"></div>
<div style="left:461px;top:514px;width:20px;height:8px;background:#f0f0f0;border-right:1px solid #dcdcdc"></div>
<div class="t" style="left:464px;top:85.69px;font-size:11px;line-height:11px;color:#000;">ID</div>
<div class="t" style="left:535px;top:85.69px;font-size:11px;line-height:11px;color:#000;">Имя типа ЗА</div>
<div class="t" style="left:784.5px;top:85.69px;font-size:11px;line-height:11px;color:#000;">n</div>
<div class="t" style="left:806.5px;top:85.69px;font-size:11px;line-height:11px;color:#000;">d</div>
<div class="t" style="left:828.5px;top:85.69px;font-size:11px;line-height:11px;color:#000;">S</div>
<div class="t" style="left:863.5px;top:85.69px;font-size:11px;line-height:11px;color:#000;">ЗС1</div>
<div class="t" style="left:897.3px;top:85.69px;font-size:11px;line-height:11px;color:#000;">ЗС2</div>
<div style="left:921.4px;top:82px;width:9.600000000000023px;height:440px;background:#fff"></div>
<div style="left:921.4px;top:100px;width:9.600000000000023px;height:126px;background:#dadada"></div>
<svg style="position:absolute;left:921.4px;top:82px;" width="10" height="17" viewBox="0 0 10 17"><path d="M2.5 10.5L5 8L7.5 10.5" stroke="#444" stroke-width="1.2" fill="none"/></svg>
<svg style="position:absolute;left:926px;top:158px;" width="6" height="9" viewBox="0 0 6 9"><path d="M0 1H6M0 4.3H6M0 7.6H6" stroke="#606060" stroke-width="1.6"/></svg>
<div style="left:921.4px;top:504px;width:9.600000000000023px;height:1px;background:#c8c8c8"></div>
<div style="left:921.4px;top:521px;width:9.600000000000023px;height:1px;background:#c8c8c8"></div>
<svg style="position:absolute;left:921.4px;top:505px;" width="10" height="16" viewBox="0 0 10 16"><path d="M2.5 6.5L5 9L7.5 6.5" stroke="#444" stroke-width="1.2" fill="none"/></svg>
<div style="left:460px;top:522px;width:461.4px;height:9px;background:#fff"></div>
<div style="left:921.4px;top:522px;width:9.600000000000023px;height:9px;background:#f0f0f0"></div>
<div style="left:904px;top:522px;width:1px;height:9px;background:#c8c8c8"></div>
<div style="left:920px;top:522px;width:1px;height:9px;background:#c8c8c8"></div>
<svg style="position:absolute;left:905px;top:522px;" width="15" height="9" viewBox="0 0 15 9"><path d="M5 2L9 6" stroke="#333" stroke-width="1.3"/></svg>
<div style="left:944px;top:31px;width:340px;height:571px;background:#f0f0f0;border-left:1px solid #555"></div>
<div style="left:945px;top:31px;width:1px;height:571px;background:#fff"></div>
<div style="left:1282px;top:31px;width:2px;height:571px;background:#a0a4a8"></div>
<div style="left:944px;top:600px;width:340px;height:2px;background:#a0a4a8"></div>
<div style="left:947px;top:34px;width:231px;height:21px;background:#fff;border:1px solid #7a7a7a;"></div>
<div class="t" style="left:952px;top:39.69px;font-size:11px;line-height:11px;color:#000;">Комбінований прототип круглого перерізу</div>
<div style="left:1187px;top:34px;width:56px;height:20px;background:#f4f4f4;border-left:2px solid #7a7a7a;border-top:2px solid #7a7a7a;border-right:0;border-bottom:0"></div>
<div style="left:1191px;top:38px;width:32px;height:13px;background:#7ad87e;border:1px solid #555"></div>
<div style="left:1228px;top:36px;width:14px;height:17px;background:#f0f0f0;border-left:1px solid #fff;border-top:1px solid #fff;border-right:2px solid #696969;border-bottom:2px solid #696969"></div>
<svg style="position:absolute;left:1231px;top:42px;" width="10" height="6" viewBox="0 0 10 6"><path d="M0 0H10L5 5.5Z" fill="#000"/></svg>
<div style="left:975px;top:99px;width:42px;height:46px;background:#f0f0f0;border-left:1px solid #fff;border-top:1px solid #fff;border-right:2px solid #6a6a6a;border-bottom:2px solid #6a6a6a"></div>
<div style="left:1047px;top:99px;width:41px;height:46px;background:#f4f4f4;border-left:2px solid #6a6a6a;border-top:2px solid #6a6a6a;border-right:1px solid #fff;border-bottom:1px solid #fff"></div>
<div style="left:1119px;top:99px;width:41px;height:46px;background:#f0f0f0;border-left:1px solid #fff;border-top:1px solid #fff;border-right:2px solid #6a6a6a;border-bottom:2px solid #6a6a6a"></div>
<div style="left:1194px;top:99px;width:41px;height:46px;background:#f0f0f0;border-left:1px solid #fff;border-top:1px solid #fff;border-right:2px solid #6a6a6a;border-bottom:2px solid #6a6a6a"></div>
<svg style="position:absolute;left:982.0px;top:107.0px;" width="31.0" height="31.0" viewBox="0 0 31.0 31.0"><defs><radialGradient id="dg997.5" cx="0.4" cy="0.35" r="0.7"><stop offset="0" stop-color="#fbfbfb"/><stop offset="1" stop-color="#b8c0c8"/></radialGradient></defs><circle cx="15.5" cy="15.5" r="14.5" fill="url(#dg997.5)" stroke="#666" stroke-width="1"/><circle cx="25.00" cy="15.50" r="1.8" fill="#d81818"/><circle cx="22.22" cy="22.22" r="1.8" fill="#d81818"/><circle cx="15.50" cy="25.00" r="1.8" fill="#d81818"/><circle cx="8.78" cy="22.22" r="1.8" fill="#d81818"/><circle cx="6.00" cy="15.50" r="1.8" fill="#d81818"/><circle cx="8.78" cy="8.78" r="1.8" fill="#d81818"/><circle cx="15.50" cy="6.00" r="1.8" fill="#d81818"/><circle cx="22.22" cy="8.78" r="1.8" fill="#d81818"/></svg>
<svg style="position:absolute;left:1053.0px;top:107.0px;" width="31.0" height="31.0" viewBox="0 0 31.0 31.0"><defs><radialGradient id="dg1068.5" cx="0.4" cy="0.35" r="0.7"><stop offset="0" stop-color="#fbfbfb"/><stop offset="1" stop-color="#b8c0c8"/></radialGradient></defs><circle cx="15.5" cy="15.5" r="14.5" fill="url(#dg1068.5)" stroke="#666" stroke-width="1"/><circle cx="15.5" cy="15.5" r="12.0" fill="none" stroke="#1a8fd0" stroke-width="2.2"/><circle cx="25.00" cy="15.50" r="1.8" fill="#d81818"/><circle cx="22.22" cy="22.22" r="1.8" fill="#d81818"/><circle cx="15.50" cy="25.00" r="1.8" fill="#d81818"/><circle cx="8.78" cy="22.22" r="1.8" fill="#d81818"/><circle cx="6.00" cy="15.50" r="1.8" fill="#d81818"/><circle cx="8.78" cy="8.78" r="1.8" fill="#d81818"/><circle cx="15.50" cy="6.00" r="1.8" fill="#d81818"/><circle cx="22.22" cy="8.78" r="1.8" fill="#d81818"/></svg>
<svg style="position:absolute;left:1125.0px;top:107.0px;" width="31.0" height="31.0" viewBox="0 0 31.0 31.0"><defs><radialGradient id="dg1140.5" cx="0.4" cy="0.35" r="0.7"><stop offset="0" stop-color="#fbfbfb"/><stop offset="1" stop-color="#b8c0c8"/></radialGradient></defs><circle cx="15.5" cy="15.5" r="14.5" fill="url(#dg1140.5)" stroke="#666" stroke-width="1"/><circle cx="15.5" cy="15.5" r="12.0" fill="none" stroke="#1a8fd0" stroke-width="2.2"/><path d="M10.5 9Q15.5 1 20.5 9" stroke="#1a8fd0" stroke-width="2" fill="none"/><path d="M10.5 8.5H20.5" stroke="#1a8fd0" stroke-width="1.6"/></svg>
<svg style="position:absolute;left:1196px;top:100px;" width="40" height="40" viewBox="0 0 40 40"><rect x="6" y="11" width="30" height="5" fill="#ddd"/><rect x="6.0" y="11" width="4.3" height="4" fill="#f08080"/><rect x="10.3" y="11" width="4.3" height="4" fill="#f0c060"/><rect x="14.6" y="11" width="4.3" height="4" fill="#e0e060"/><rect x="18.9" y="11" width="4.3" height="4" fill="#80d080"/><rect x="23.2" y="11" width="4.3" height="4" fill="#60c0e0"/><rect x="27.5" y="11" width="4.3" height="4" fill="#80a0e0"/><rect x="31.8" y="11" width="4.3" height="4" fill="#d090d0"/><rect x="7" y="19" width="2" height="2" fill="#666"/><rect x="11" y="19" width="2" height="2" fill="#666"/><rect x="15" y="19" width="2" height="2" fill="#666"/><path d="M21 19L31 26L27 27L30 33L28 34L25 28L22 31Z" fill="#888"/></svg>
<svg style="position:absolute;left:953px;top:240px;" width="13" height="13" viewBox="0 0 13 13"><circle cx="6.5" cy="6.5" r="6" fill="#fff" stroke="#333"/><circle cx="6.5" cy="6.5" r="3.5" fill="#1a1a1a"/></svg>
<div class="t" style="left:971px;top:241.69px;font-size:11px;line-height:11px;color:#000;">Ø</div>
<div style="left:994px;top:237px;width:34px;height:19px;background:#e5e5e5;border:1px solid #adadad"></div>
<div class="t" style="left:999px;top:242.69px;font-size:11px;line-height:11px;color:#000;">16</div>
<svg style="position:absolute;left:1017px;top:244.5px;" width="9" height="6" viewBox="0 0 9 6"><path d="M0.5 0.5L4.5 4.5L8.5 0.5" stroke="#555" stroke-width="1" fill="none"/></svg>
<div class="t" style="left:1033px;top:241.69px;font-size:11px;line-height:11px;color:#000;">мм</div>
<svg style="position:absolute;left:1061px;top:240px;" width="13" height="13" viewBox="0 0 13 13"><circle cx="6.5" cy="6.5" r="6" fill="#fff" stroke="#bbb"/></svg>
<div class="t" style="left:1077px;top:241.69px;font-size:11px;line-height:11px;color:#a0a0a0;">As</div>
<div style="left:1102px;top:237px;width:33px;height:21px;background:#f0f0f0;border:1px solid #ccc"></div>
<div class="t" style="left:1106px;top:241.69px;font-size:11px;line-height:11px;color:#909090;">2.011</div>
<svg style="position:absolute;left:1147px;top:240px;" width="13" height="13" viewBox="0 0 13 13"><circle cx="6.5" cy="6.5" r="6" fill="#fff" stroke="#333"/></svg>
<div class="t" style="left:1163px;top:241.69px;font-size:11px;line-height:11px;color:#000;">ΣAs</div>
<div style="left:1190px;top:236px;width:33px;height:21px;background:#f0f0f0;border:1px solid #ccc"></div>
<div class="t" style="left:1196px;top:240.69px;font-size:11px;line-height:11px;color:#8080a0;">0</div>
<div class="t" style="left:1231px;top:242.69px;font-size:11px;line-height:11px;color:#000;">см2</div>
<div class="t" style="left:957px;top:268.69px;font-size:11px;line-height:11px;color:#000;">Кільк.</div>
<div style="left:994px;top:263px;width:33px;height:21px;background:#fff;border:1px solid #7a7a7a;"></div>
<div class="t" style="left:999px;top:267.69px;font-size:11px;line-height:11px;color:#000;">8</div>
<svg style="position:absolute;left:953px;top:290px;" width="13" height="13" viewBox="0 0 13 13"><circle cx="6.5" cy="6.5" r="6" fill="#fff" stroke="#333"/></svg>
<div class="t" style="left:968px;top:291.69px;font-size:11px;line-height:11px;color:#000;">З матеріалів - М</div>
<svg style="position:absolute;left:953px;top:308px;" width="13" height="13" viewBox="0 0 13 13"><circle cx="6.5" cy="6.5" r="6" fill="#fff" stroke="#333"/><circle cx="6.5" cy="6.5" r="3.5" fill="#1a1a1a"/></svg>
<div class="t" style="left:968px;top:309.69px;font-size:11px;line-height:11px;color:#000;">Захисний шар - ЗШ</div>
<div class="t" style="left:964px;top:350.69px;font-size:11px;line-height:11px;color:#000;">c</div>
<div style="left:979px;top:346px;width:34px;height:18px;background:#fff;border:1px solid #0078d7"></div>
<div class="t" style="left:985px;top:350.69px;font-size:11px;line-height:11px;color:#000;">10</div>
<div class="t" style="left:1020px;top:350.69px;font-size:11px;line-height:11px;color:#000;">см</div>
<div class="t" style="left:964px;top:372.69px;font-size:11px;line-height:11px;color:#000;">Поперечна арматура</div>
<div class="t" style="left:963px;top:390.69px;font-size:11px;line-height:11px;color:#000;">d</div>
<div style="left:979px;top:388px;width:34px;height:19px;background:#e5e5e5;border:1px solid #adadad"></div>
<div class="t" style="left:984px;top:393.69px;font-size:11px;line-height:11px;color:#000;">8</div>
<svg style="position:absolute;left:1002px;top:395.5px;" width="9" height="6" viewBox="0 0 9 6"><path d="M0.5 0.5L4.5 4.5L8.5 0.5" stroke="#555" stroke-width="1" fill="none"/></svg>
<div class="t" style="left:1020px;top:392.69px;font-size:11px;line-height:11px;color:#000;">мм</div>
<div class="t" style="left:1059px;top:390.69px;font-size:11px;line-height:11px;color:#000;">S</div>
<div style="left:1069px;top:388px;width:34px;height:19px;background:#fff;border:1px solid #7a7a7a;"></div>
<div class="t" style="left:1075px;top:393.69px;font-size:11px;line-height:11px;color:#000;">100</div>
<div class="t" style="left:1108px;top:392.69px;font-size:11px;line-height:11px;color:#000;">мм</div>
<svg style="position:absolute;left:1150px;top:280px;" width="110" height="120" viewBox="0 0 110 120"><defs><linearGradient id="cg" x1="0" y1="0" x2="1" y2="1"><stop offset="0" stop-color="#f0f0f0"/><stop offset="1" stop-color="#b8b8b8"/></linearGradient><radialGradient id="rd" cx="0.35" cy="0.35" r="0.7"><stop offset="0" stop-color="#f04040"/><stop offset="1" stop-color="#b01010"/></radialGradient></defs><circle cx="53.5" cy="61" r="43" fill="url(#cg)" stroke="#707070" stroke-width="2"/><circle cx="53.5" cy="61" r="39.5" fill="none" stroke="#d8d8d8" stroke-width="1"/><circle cx="53.5" cy="61" r="37" fill="none" stroke="#1a8fd0" stroke-width="3"/><path d="M24.36 50.40A31 31 0 0 1 40.48 32.91" stroke="#1a8fd0" stroke-width="2.6" fill="none" stroke-dasharray="7 5"/><line x1="53.5" y1="61" x2="53.5" y2="35" stroke="#e02020" stroke-width="1"/><line x1="53.5" y1="61" x2="25.5" y2="61" stroke="#1a8fd0" stroke-width="1"/><circle cx="87.50" cy="61.00" r="3.8" fill="url(#rd)"/><circle cx="77.54" cy="85.04" r="3.8" fill="url(#rd)"/><circle cx="53.50" cy="95.00" r="3.8" fill="url(#rd)"/><circle cx="29.46" cy="85.04" r="3.8" fill="url(#rd)"/><circle cx="19.50" cy="61.00" r="3.8" fill="url(#rd)"/><circle cx="29.46" cy="36.96" r="3.8" fill="url(#rd)"/><circle cx="53.50" cy="27.00" r="3.8" fill="url(#rd)"/><circle cx="77.54" cy="36.96" r="3.8" fill="url(#rd)"/><path d="M68.5 23L80.5 12H97.5" stroke="#222" stroke-width="0.9" fill="none"/><text x="83.5" y="10" font-family="Liberation Sans" font-size="15" fill="#222">d</text><circle cx="45.5" cy="68" r="4.5" fill="none" stroke="#222" stroke-width="1"/><line x1="39.5" y1="74" x2="51.5" y2="62" stroke="#222" stroke-width="1"/><path d="M29.5 83L37.5 77H54.5" stroke="#222" stroke-width="0.9" fill="none"/><line x1="9.5" y1="71" x2="9.5" y2="113" stroke="#222" stroke-width="0.9"/><line x1="14.5" y1="83" x2="14.5" y2="113" stroke="#222" stroke-width="0.9"/><path d="M3.5 111L20.5 111M6.5 108L11.5 113M12.5 108L17.5 113" stroke="#222" stroke-width="0.8"/><text x="22.0" y="111" font-family="Liberation Serif" font-weight="bold" font-size="16" fill="#222">c</text></svg>
<div style="left:1163px;top:409px;width:83px;height:20px;background:#e1e1e1;border:1px solid #adadad;border-right-color:#7a7a7a;border-bottom-color:#7a7a7a;"></div>
<div class="t" style="left:1105.5px;width:200px;text-align:center;top:414.69px;font-size:11px;line-height:11px;color:#000;">Перегляд</div>
<div style="left:954px;top:544px;width:11px;height:11px;background:#fff;border:1px solid #333"></div>
<div style="left:977px;top:542px;width:166px;height:18px;background:#cccccc"></div>
<div class="t" style="left:960.0px;width:200px;text-align:center;top:545.69px;font-size:11px;line-height:11px;color:#a0a0a0;">Урахування фіз. нелінійності</div>
<div style="left:1160px;top:544px;width:11px;height:11px;background:#fff;border:1px solid #ccc"></div>
<div class="t" style="left:1176px;top:545.69px;font-size:11px;line-height:11px;color:#505050;">Точний тип ЗА</div>
<div style="left:1077px;top:573px;width:27px;height:23px;background:#f0f0f0;border-left:1px solid #fff;border-top:1px solid #fff;border-right:2px solid #696969;border-bottom:2px solid #696969"></div>
<svg style="position:absolute;left:1084px;top:578px;" width="16" height="16" viewBox="0 0 16 16"><path d="M6 1H10V6H15V10H10V15H6V10H1V6H6Z" fill="#1a2a7a"/></svg>
<div style="left:1115px;top:573px;width:27px;height:23px;background:#f0f0f0;border-left:1px solid #fff;border-top:1px solid #fff;border-right:2px solid #696969;border-bottom:2px solid #696969"></div>
<svg style="position:absolute;left:1119px;top:577px;" width="22" height="18" viewBox="0 0 22 18"><path d="M4 10L8 15L18 3" stroke="#8ab890" stroke-width="3" fill="none"/><path d="M2 16h1M4 16h1M6 16h1" stroke="#555" stroke-width="1"/></svg>
<div style="left:898px;top:569px;width:1px;height:26px;background:#696969"></div>
<div style="left:907px;top:569px;width:21px;height:23px;background:#f0f0f0;border-left:1px solid #fff;border-top:1px solid #fff;border-right:2px solid #696969;border-bottom:2px solid #696969"></div>
<svg style="position:absolute;left:911px;top:574px;" width="18" height="16" viewBox="0 0 18 16"><path d="M8 2L2 8L8 14M15 2L9 8L15 14" stroke="#1a2a7a" stroke-width="2.2" fill="none"/></svg>
<div style="left:48px;top:151px;width:849px;height:604px;background:#f0f0f0"></div>
<div style="left:103px;top:205px;width:38px;height:16px;background:#ececec;border:1px solid #8a9aaa;border-bottom:none"></div>
<div style="left:142px;top:205px;width:42px;height:16px;background:#ececec;border:1px solid #8a9aaa;border-bottom:none"></div>
<div style="left:57px;top:221px;width:493px;height:463px;background:#fff;border:1px solid #8a9aaa"></div>
<div style="left:57px;top:203px;width:45px;height:19px;background:#fff;border:1px solid #8a9aaa;border-bottom:none"></div>
<svg style="position:absolute;left:67px;top:205px;" width="14" height="14" viewBox="0 0 14 14"><defs><linearGradient id="tg1" x1="0" y1="0" x2="1" y2="1"><stop offset="0" stop-color="#c8d8e0"/><stop offset="1" stop-color="#4a8090"/></linearGradient></defs><rect x="0.5" y="0.5" width="12.5" height="13" fill="url(#tg1)" stroke="#1e3a50"/></svg>
<svg style="position:absolute;left:107px;top:205px;" width="17" height="17" viewBox="0 0 17 17"><circle cx="8" cy="8.5" r="6" fill="none" stroke="#6a8898" stroke-width="4"/><circle cx="8" cy="8.5" r="8" fill="none" stroke="#3a5868" stroke-width="0.8"/><circle cx="8" cy="8.5" r="4" fill="none" stroke="#3a5868" stroke-width="0.8"/></svg>
<svg style="position:absolute;left:148px;top:208px;" width="19" height="12" viewBox="0 0 19 12"><path d="M1 6L5 2H18L15 7H1Z" fill="#b0c8d0" stroke="#2a4858" stroke-width="0.8"/><path d="M1 6H15V10H1Z" fill="#5a8898" stroke="#2a4858" stroke-width="0.8"/><path d="M15 7L18 2V6L15 10Z" fill="#3a6878" stroke="#2a4858" stroke-width="0.8"/></svg>
<div style="left:61px;top:223px;width:483px;height:459px;background:#f0f0f0"></div>
<div style="left:73px;top:232px;width:471px;height:1px;background:#555"></div>
<div style="left:73px;top:232px;width:1px;height:441px;background:#555"></div>
<div style="left:74px;top:233px;width:20px;height:17px;background:#efefef;border-right:1px solid #a0a0a0"></div>
<div style="left:95px;top:233px;width:16px;height:17px;background:#efefef;border-right:1px solid #a0a0a0"></div>
<div style="left:112px;top:233px;width:14px;height:17px;background:#efefef;border-right:1px solid #a0a0a0"></div>
<div style="left:127px;top:233px;width:16px;height:17px;background:#efefef;border-right:1px solid #a0a0a0"></div>
<div style="left:144px;top:233px;width:227px;height:17px;background:#efefef;border-right:1px solid #a0a0a0"></div>
<div style="left:372px;top:233px;width:20.5px;height:17px;background:#efefef;border-right:1px solid #a0a0a0"></div>
<div style="left:393.5px;top:233px;width:21.0px;height:17px;background:#efefef;border-right:1px solid #a0a0a0"></div>
<div style="left:415.5px;top:233px;width:21.0px;height:17px;background:#efefef;border-right:1px solid #a0a0a0"></div>
<div style="left:437.5px;top:233px;width:34.0px;height:17px;background:#efefef;border-right:1px solid #a0a0a0"></div>
<div style="left:472.5px;top:233px;width:32.799999999999955px;height:17px;background:#efefef;border-right:1px solid #a0a0a0"></div>
<div style="left:506.29999999999995px;top:233px;width:27.100000000000023px;height:17px;background:#efefef;border-right:1px solid #a0a0a0"></div>
<div style="left:73px;top:250px;width:461.4px;height:1px;background:#a0a0a0"></div>
<div style="left:74px;top:251px;width:20px;height:17px;background:#efefef;border-right:1px solid #a0a0a0;border-bottom:1px solid #a0a0a0"></div>
<div style="left:95px;top:251px;width:17px;height:18px;background:#fff"></div>
<div style="left:112px;top:251px;width:15px;height:17px;background:#bf8ad0"></div>
<div style="left:127px;top:251px;width:407.4px;height:17px;background:#fdf5e0"></div>
<div style="left:95px;top:268px;width:439.4px;height:1px;background:#dcdcdc"></div>
<div style="left:143px;top:251px;width:1px;height:18px;background:#dcdcdc"></div>
<div style="left:371px;top:251px;width:1px;height:18px;background:#dcdcdc"></div>
<div style="left:392.5px;top:251px;width:1px;height:18px;background:#dcdcdc"></div>
<div style="left:414.5px;top:251px;width:1px;height:18px;background:#dcdcdc"></div>
<div style="left:436.5px;top:251px;width:1px;height:18px;background:#dcdcdc"></div>
<div style="left:471.5px;top:251px;width:1px;height:18px;background:#dcdcdc"></div>
<div style="left:505.29999999999995px;top:251px;width:1px;height:18px;background:#dcdcdc"></div>
<div class="t" style="left:397.5px;top:253.89px;font-size:11px;line-height:11px;color:#000;">16</div>
<div class="t" style="left:419.5px;top:253.89px;font-size:11px;line-height:11px;color:#000;">40</div>
<div class="t" style="left:441.5px;top:253.89px;font-size:11px;line-height:11px;color:#000;">12.6</div>
<div class="t" style="left:476.5px;top:253.89px;font-size:11px;line-height:11px;color:#000;">3.0</div>
<div class="t" style="left:510.29999999999995px;top:253.89px;font-size:11px;line-height:11px;color:#000;">3.0</div>
<div style="left:74px;top:269px;width:20px;height:17px;background:#efefef;border-right:1px solid #a0a0a0;border-bottom:1px solid #a0a0a0"></div>
<div style="left:95px;top:269px;width:17px;height:18px;background:#fff"></div>
<div style="left:112px;top:269px;width:15px;height:17px;background:#e8a05a"></div>
<div style="left:127px;top:269px;width:407.4px;height:17px;background:#fffdf0"></div>
<div style="left:95px;top:286px;width:439.4px;height:1px;background:#dcdcdc"></div>
<div style="left:143px;top:269px;width:1px;height:18px;background:#dcdcdc"></div>
<div style="left:371px;top:269px;width:1px;height:18px;background:#dcdcdc"></div>
<div style="left:392.5px;top:269px;width:1px;height:18px;background:#dcdcdc"></div>
<div style="left:414.5px;top:269px;width:1px;height:18px;background:#dcdcdc"></div>
<div style="left:436.5px;top:269px;width:1px;height:18px;background:#dcdcdc"></div>
<div style="left:471.5px;top:269px;width:1px;height:18px;background:#dcdcdc"></div>
<div style="left:505.29999999999995px;top:269px;width:1px;height:18px;background:#dcdcdc"></div>
<div class="t" style="left:397.5px;top:271.89px;font-size:11px;line-height:11px;color:#000;">4</div>
<div class="t" style="left:419.5px;top:271.89px;font-size:11px;line-height:11px;color:#000;">40</div>
<div class="t" style="left:441.5px;top:271.89px;font-size:11px;line-height:11px;color:#000;">12.6</div>
<div class="t" style="left:476.5px;top:271.89px;font-size:11px;line-height:11px;color:#000;">3.0</div>
<div class="t" style="left:510.29999999999995px;top:271.89px;font-size:11px;line-height:11px;color:#000;">3.0</div>
<div style="left:74px;top:287px;width:20px;height:17px;background:#efefef;border-right:1px solid #a0a0a0;border-bottom:1px solid #a0a0a0"></div>
<div style="left:95px;top:287px;width:17px;height:18px;background:#fff"></div>
<div style="left:112px;top:287px;width:15px;height:17px;background:#8a149a"></div>
<div style="left:127px;top:287px;width:407.4px;height:17px;background:#fdf5e0"></div>
<div style="left:95px;top:304px;width:439.4px;height:1px;background:#dcdcdc"></div>
<div style="left:143px;top:287px;width:1px;height:18px;background:#dcdcdc"></div>
<div style="left:371px;top:287px;width:1px;height:18px;background:#dcdcdc"></div>
<div style="left:392.5px;top:287px;width:1px;height:18px;background:#dcdcdc"></div>
<div style="left:414.5px;top:287px;width:1px;height:18px;background:#dcdcdc"></div>
<div style="left:436.5px;top:287px;width:1px;height:18px;background:#dcdcdc"></div>
<div style="left:471.5px;top:287px;width:1px;height:18px;background:#dcdcdc"></div>
<div style="left:505.29999999999995px;top:287px;width:1px;height:18px;background:#dcdcdc"></div>
<div class="t" style="left:397.5px;top:289.89px;font-size:11px;line-height:11px;color:#000;">4</div>
<div class="t" style="left:419.5px;top:289.89px;font-size:11px;line-height:11px;color:#000;">40</div>
<div class="t" style="left:441.5px;top:289.89px;font-size:11px;line-height:11px;color:#000;">12.6</div>
<div class="t" style="left:476.5px;top:289.89px;font-size:11px;line-height:11px;color:#000;">3.0</div>
<div class="t" style="left:510.29999999999995px;top:289.89px;font-size:11px;line-height:11px;color:#000;">3.0</div>
<div style="left:74px;top:305px;width:20px;height:17px;background:#efefef;border-right:1px solid #a0a0a0;border-bottom:1px solid #a0a0a0"></div>
<div style="left:95px;top:305px;width:17px;height:18px;background:#fff"></div>
<div style="left:112px;top:305px;width:15px;height:17px;background:#b0106e"></div>
<div style="left:127px;top:305px;width:407.4px;height:17px;background:#fffdf0"></div>
<div style="left:95px;top:322px;width:439.4px;height:1px;background:#dcdcdc"></div>
<div style="left:143px;top:305px;width:1px;height:18px;background:#dcdcdc"></div>
<div style="left:371px;top:305px;width:1px;height:18px;background:#dcdcdc"></div>
<div style="left:392.5px;top:305px;width:1px;height:18px;background:#dcdcdc"></div>
<div style="left:414.5px;top:305px;width:1px;height:18px;background:#dcdcdc"></div>
<div style="left:436.5px;top:305px;width:1px;height:18px;background:#dcdcdc"></div>
<div style="left:471.5px;top:305px;width:1px;height:18px;background:#dcdcdc"></div>
<div style="left:505.29999999999995px;top:305px;width:1px;height:18px;background:#dcdcdc"></div>
<div class="t" style="left:397.5px;top:307.89px;font-size:11px;line-height:11px;color:#000;">4</div>
<div class="t" style="left:419.5px;top:307.89px;font-size:11px;line-height:11px;color:#000;">40</div>
<div class="t" style="left:441.5px;top:307.89px;font-size:11px;line-height:11px;color:#000;">12.6</div>
<div class="t" style="left:476.5px;top:307.89px;font-size:11px;line-height:11px;color:#000;">3.0</div>
<div class="t" style="left:510.29999999999995px;top:307.89px;font-size:11px;line-height:11px;color:#000;">3.0</div>
<div style="left:74px;top:323px;width:20px;height:17px;background:#efefef;border-right:1px solid #a0a0a0;border-bottom:1px solid #a0a0a0"></div>
<div style="left:95px;top:323px;width:17px;height:18px;background:#fff"></div>
<div style="left:112px;top:323px;width:15px;height:17px;background:#00a0a0"></div>
<div style="left:127px;top:323px;width:407.4px;height:17px;background:#fdf5e0"></div>
<div style="left:95px;top:340px;width:439.4px;height:1px;background:#dcdcdc"></div>
<div style="left:143px;top:323px;width:1px;height:18px;background:#dcdcdc"></div>
<div style="left:371px;top:323px;width:1px;height:18px;background:#dcdcdc"></div>
<div style="left:392.5px;top:323px;width:1px;height:18px;background:#dcdcdc"></div>
<div style="left:414.5px;top:323px;width:1px;height:18px;background:#dcdcdc"></div>
<div style="left:436.5px;top:323px;width:1px;height:18px;background:#dcdcdc"></div>
<div style="left:471.5px;top:323px;width:1px;height:18px;background:#dcdcdc"></div>
<div style="left:505.29999999999995px;top:323px;width:1px;height:18px;background:#dcdcdc"></div>
<div class="t" style="left:397.5px;top:325.89px;font-size:11px;line-height:11px;color:#000;">8</div>
<div class="t" style="left:419.5px;top:325.89px;font-size:11px;line-height:11px;color:#000;">40</div>
<div class="t" style="left:441.5px;top:325.89px;font-size:11px;line-height:11px;color:#000;">12.6</div>
<div class="t" style="left:476.5px;top:325.89px;font-size:11px;line-height:11px;color:#000;">3.0</div>
<div class="t" style="left:510.29999999999995px;top:325.89px;font-size:11px;line-height:11px;color:#000;">3.0</div>
<div style="left:74px;top:341px;width:20px;height:17px;background:#efefef;border-right:1px solid #a0a0a0;border-bottom:1px solid #a0a0a0"></div>
<div style="left:95px;top:341px;width:17px;height:18px;background:#fff"></div>
<div style="left:112px;top:341px;width:15px;height:17px;background:#703050"></div>
<div style="left:127px;top:341px;width:407.4px;height:17px;background:#fffdf0"></div>
<div style="left:95px;top:358px;width:439.4px;height:1px;background:#dcdcdc"></div>
<div style="left:143px;top:341px;width:1px;height:18px;background:#dcdcdc"></div>
<div style="left:371px;top:341px;width:1px;height:18px;background:#dcdcdc"></div>
<div style="left:392.5px;top:341px;width:1px;height:18px;background:#dcdcdc"></div>
<div style="left:414.5px;top:341px;width:1px;height:18px;background:#dcdcdc"></div>
<div style="left:436.5px;top:341px;width:1px;height:18px;background:#dcdcdc"></div>
<div style="left:471.5px;top:341px;width:1px;height:18px;background:#dcdcdc"></div>
<div style="left:505.29999999999995px;top:341px;width:1px;height:18px;background:#dcdcdc"></div>
<div class="t" style="left:397.5px;top:343.89px;font-size:11px;line-height:11px;color:#000;">2</div>
<div class="t" style="left:419.5px;top:343.89px;font-size:11px;line-height:11px;color:#000;">40</div>
<div class="t" style="left:441.5px;top:343.89px;font-size:11px;line-height:11px;color:#000;">12.6</div>
<div class="t" style="left:476.5px;top:343.89px;font-size:11px;line-height:11px;color:#000;">3.0</div>
<div class="t" style="left:510.29999999999995px;top:343.89px;font-size:11px;line-height:11px;color:#000;">3.0</div>
<div style="left:74px;top:359px;width:20px;height:17px;background:#efefef;border-right:1px solid #a0a0a0;border-bottom:1px solid #a0a0a0"></div>
<div style="left:95px;top:359px;width:17px;height:18px;background:#fff"></div>
<div style="left:112px;top:359px;width:15px;height:17px;background:#703050"></div>
<div style="left:127px;top:359px;width:407.4px;height:17px;background:#fdf5e0"></div>
<div style="left:95px;top:376px;width:439.4px;height:1px;background:#dcdcdc"></div>
<div style="left:143px;top:359px;width:1px;height:18px;background:#dcdcdc"></div>
<div style="left:371px;top:359px;width:1px;height:18px;background:#dcdcdc"></div>
<div style="left:392.5px;top:359px;width:1px;height:18px;background:#dcdcdc"></div>
<div style="left:414.5px;top:359px;width:1px;height:18px;background:#dcdcdc"></div>
<div style="left:436.5px;top:359px;width:1px;height:18px;background:#dcdcdc"></div>
<div style="left:471.5px;top:359px;width:1px;height:18px;background:#dcdcdc"></div>
<div style="left:505.29999999999995px;top:359px;width:1px;height:18px;background:#dcdcdc"></div>
<div class="t" style="left:397.5px;top:361.89px;font-size:11px;line-height:11px;color:#000;">2</div>
<div class="t" style="left:419.5px;top:361.89px;font-size:11px;line-height:11px;color:#000;">40</div>
<div class="t" style="left:441.5px;top:361.89px;font-size:11px;line-height:11px;color:#000;">12.6</div>
<div class="t" style="left:476.5px;top:361.89px;font-size:11px;line-height:11px;color:#000;">3.0</div>
<div class="t" style="left:510.29999999999995px;top:361.89px;font-size:11px;line-height:11px;color:#000;">3.0</div>
<div style="left:74px;top:377px;width:20px;height:17px;background:#efefef;border-right:1px solid #a0a0a0;border-bottom:1px solid #a0a0a0"></div>
<div style="left:95px;top:377px;width:17px;height:18px;background:#fff"></div>
<div style="left:112px;top:377px;width:15px;height:17px;background:#e0a890"></div>
<div style="left:127px;top:377px;width:407.4px;height:17px;background:#fffdf0"></div>
<div style="left:95px;top:394px;width:439.4px;height:1px;background:#dcdcdc"></div>
<div style="left:143px;top:377px;width:1px;height:18px;background:#dcdcdc"></div>
<div style="left:371px;top:377px;width:1px;height:18px;background:#dcdcdc"></div>
<div style="left:392.5px;top:377px;width:1px;height:18px;background:#dcdcdc"></div>
<div style="left:414.5px;top:377px;width:1px;height:18px;background:#dcdcdc"></div>
<div style="left:436.5px;top:377px;width:1px;height:18px;background:#dcdcdc"></div>
<div style="left:471.5px;top:377px;width:1px;height:18px;background:#dcdcdc"></div>
<div style="left:505.29999999999995px;top:377px;width:1px;height:18px;background:#dcdcdc"></div>
<div class="t" style="left:397.5px;top:379.89px;font-size:11px;line-height:11px;color:#000;">0</div>
<div class="t" style="left:419.5px;top:379.89px;font-size:11px;line-height:11px;color:#000;">0</div>
<div class="t" style="left:441.5px;top:379.89px;font-size:11px;line-height:11px;color:#000;">0.0</div>
<div class="t" style="left:476.5px;top:379.89px;font-size:11px;line-height:11px;color:#000;">0.0</div>
<div class="t" style="left:510.29999999999995px;top:379.89px;font-size:11px;line-height:11px;color:#000;">0.0</div>
<div style="left:74px;top:395px;width:20px;height:17px;background:#efefef;border-right:1px solid #a0a0a0;border-bottom:1px solid #a0a0a0"></div>
<div style="left:95px;top:395px;width:17px;height:18px;background:#fff"></div>
<div style="left:112px;top:395px;width:15px;height:17px;background:#704870"></div>
<div style="left:127px;top:395px;width:407.4px;height:17px;background:#fdf5e0"></div>
<div style="left:95px;top:412px;width:439.4px;height:1px;background:#dcdcdc"></div>
<div style="left:143px;top:395px;width:1px;height:18px;background:#dcdcdc"></div>
<div style="left:371px;top:395px;width:1px;height:18px;background:#dcdcdc"></div>
<div style="left:392.5px;top:395px;width:1px;height:18px;background:#dcdcdc"></div>
<div style="left:414.5px;top:395px;width:1px;height:18px;background:#dcdcdc"></div>
<div style="left:436.5px;top:395px;width:1px;height:18px;background:#dcdcdc"></div>
<div style="left:471.5px;top:395px;width:1px;height:18px;background:#dcdcdc"></div>
<div style="left:505.29999999999995px;top:395px;width:1px;height:18px;background:#dcdcdc"></div>
<div class="t" style="left:397.5px;top:397.89px;font-size:11px;line-height:11px;color:#000;"></div>
<div class="t" style="left:419.5px;top:397.89px;font-size:11px;line-height:11px;color:#000;"></div>
<div class="t" style="left:441.5px;top:397.89px;font-size:11px;line-height:11px;color:#000;"></div>
<div class="t" style="left:476.5px;top:397.89px;font-size:11px;line-height:11px;color:#000;"></div>
<div class="t" style="left:510.29999999999995px;top:397.89px;font-size:11px;line-height:11px;color:#000;"></div>
<div style="left:74px;top:413px;width:20px;height:17px;background:#efefef;border-right:1px solid #a0a0a0;border-bottom:1px solid #a0a0a0"></div>
<div style="left:95px;top:413px;width:17px;height:18px;background:#fff"></div>
<div style="left:112px;top:413px;width:15px;height:17px;background:#10e010"></div>
<div style="left:127px;top:413px;width:407.4px;height:17px;background:#ffffff"></div>
<div style="left:95px;top:430px;width:439.4px;height:1px;background:#dcdcdc"></div>
<div style="left:143px;top:413px;width:1px;height:18px;background:#dcdcdc"></div>
<div style="left:371px;top:413px;width:1px;height:18px;background:#dcdcdc"></div>
<div style="left:392.5px;top:413px;width:1px;height:18px;background:#dcdcdc"></div>
<div style="left:414.5px;top:413px;width:1px;height:18px;background:#dcdcdc"></div>
<div style="left:436.5px;top:413px;width:1px;height:18px;background:#dcdcdc"></div>
<div style="left:471.5px;top:413px;width:1px;height:18px;background:#dcdcdc"></div>
<div style="left:505.29999999999995px;top:413px;width:1px;height:18px;background:#dcdcdc"></div>
<div class="t" style="left:397.5px;top:415.89px;font-size:11px;line-height:11px;color:#000;">4</div>
<div class="t" style="left:419.5px;top:415.89px;font-size:11px;line-height:11px;color:#000;">40</div>
<div class="t" style="left:441.5px;top:415.89px;font-size:11px;line-height:11px;color:#000;">12.6</div>
<div class="t" style="left:476.5px;top:415.89px;font-size:11px;line-height:11px;color:#000;">3.0</div>
<div class="t" style="left:510.29999999999995px;top:415.89px;font-size:11px;line-height:11px;color:#000;">3.0</div>
<div style="left:74px;top:431px;width:20px;height:17px;background:#efefef;border-right:1px solid #a0a0a0;border-bottom:1px solid #a0a0a0"></div>
<div style="left:95px;top:431px;width:17px;height:18px;background:#fff"></div>
<div style="left:112px;top:431px;width:15px;height:17px;background:#10e010"></div>
<div style="left:127px;top:431px;width:407.4px;height:17px;background:#ffffff"></div>
<div style="left:95px;top:448px;width:439.4px;height:1px;background:#dcdcdc"></div>
<div style="left:143px;top:431px;width:1px;height:18px;background:#dcdcdc"></div>
<div style="left:371px;top:431px;width:1px;height:18px;background:#dcdcdc"></div>
<div style="left:392.5px;top:431px;width:1px;height:18px;background:#dcdcdc"></div>
<div style="left:414.5px;top:431px;width:1px;height:18px;background:#dcdcdc"></div>
<div style="left:436.5px;top:431px;width:1px;height:18px;background:#dcdcdc"></div>
<div style="left:471.5px;top:431px;width:1px;height:18px;background:#dcdcdc"></div>
<div style="left:505.29999999999995px;top:431px;width:1px;height:18px;background:#dcdcdc"></div>
<div class="t" style="left:397.5px;top:433.89px;font-size:11px;line-height:11px;color:#000;">4</div>
<div class="t" style="left:419.5px;top:433.89px;font-size:11px;line-height:11px;color:#000;">40</div>
<div class="t" style="left:441.5px;top:433.89px;font-size:11px;line-height:11px;color:#000;">12.6</div>
<div class="t" style="left:476.5px;top:433.89px;font-size:11px;line-height:11px;color:#000;">3.0</div>
<div class="t" style="left:510.29999999999995px;top:433.89px;font-size:11px;line-height:11px;color:#000;">3.0</div>
<div style="left:74px;top:449px;width:20px;height:17px;background:#efefef;border-right:1px solid #a0a0a0;border-bottom:1px solid #a0a0a0"></div>
<div style="left:95px;top:449px;width:17px;height:18px;background:#fff"></div>
<div style="left:112px;top:449px;width:15px;height:17px;background:#10e010"></div>
<div style="left:127px;top:449px;width:407.4px;height:17px;background:#ffffff"></div>
<div style="left:95px;top:466px;width:439.4px;height:1px;background:#dcdcdc"></div>
<div style="left:143px;top:449px;width:1px;height:18px;background:#dcdcdc"></div>
<div style="left:371px;top:449px;width:1px;height:18px;background:#dcdcdc"></div>
<div style="left:392.5px;top:449px;width:1px;height:18px;background:#dcdcdc"></div>
<div style="left:414.5px;top:449px;width:1px;height:18px;background:#dcdcdc"></div>
<div style="left:436.5px;top:449px;width:1px;height:18px;background:#dcdcdc"></div>
<div style="left:471.5px;top:449px;width:1px;height:18px;background:#dcdcdc"></div>
<div style="left:505.29999999999995px;top:449px;width:1px;height:18px;background:#dcdcdc"></div>
<div class="t" style="left:397.5px;top:451.89px;font-size:11px;line-height:11px;color:#000;">4</div>
<div class="t" style="left:419.5px;top:451.89px;font-size:11px;line-height:11px;color:#000;">40</div>
<div class="t" style="left:441.5px;top:451.89px;font-size:11px;line-height:11px;color:#000;">12.6</div>
<div class="t" style="left:476.5px;top:451.89px;font-size:11px;line-height:11px;color:#000;">3.0</div>
<div class="t" style="left:510.29999999999995px;top:451.89px;font-size:11px;line-height:11px;color:#000;">3.0</div>
<div style="left:74px;top:467px;width:20px;height:17px;background:#efefef;border-right:1px solid #a0a0a0;border-bottom:1px solid #a0a0a0"></div>
<div style="left:95px;top:467px;width:17px;height:18px;background:#fff"></div>
<div style="left:112px;top:467px;width:15px;height:17px;background:#10e010"></div>
<div style="left:127px;top:467px;width:407.4px;height:17px;background:#ffffff"></div>
<div style="left:95px;top:484px;width:439.4px;height:1px;background:#dcdcdc"></div>
<div style="left:143px;top:467px;width:1px;height:18px;background:#dcdcdc"></div>
<div style="left:371px;top:467px;width:1px;height:18px;background:#dcdcdc"></div>
<div style="left:392.5px;top:467px;width:1px;height:18px;background:#dcdcdc"></div>
<div style="left:414.5px;top:467px;width:1px;height:18px;background:#dcdcdc"></div>
<div style="left:436.5px;top:467px;width:1px;height:18px;background:#dcdcdc"></div>
<div style="left:471.5px;top:467px;width:1px;height:18px;background:#dcdcdc"></div>
<div style="left:505.29999999999995px;top:467px;width:1px;height:18px;background:#dcdcdc"></div>
<div class="t" style="left:397.5px;top:469.89px;font-size:11px;line-height:11px;color:#000;">4</div>
<div class="t" style="left:419.5px;top:469.89px;font-size:11px;line-height:11px;color:#000;">40</div>
<div class="t" style="left:441.5px;top:469.89px;font-size:11px;line-height:11px;color:#000;">12.6</div>
<div class="t" style="left:476.5px;top:469.89px;font-size:11px;line-height:11px;color:#000;">3.0</div>
<div class="t" style="left:510.29999999999995px;top:469.89px;font-size:11px;line-height:11px;color:#000;">3.0</div>
<div style="left:74px;top:485px;width:20px;height:17px;background:#efefef;border-right:1px solid #a0a0a0;border-bottom:1px solid #a0a0a0"></div>
<div style="left:95px;top:485px;width:17px;height:18px;background:#fff"></div>
<div style="left:112px;top:485px;width:15px;height:17px;background:#10e010"></div>
<div style="left:127px;top:485px;width:407.4px;height:17px;background:#fffdf0"></div>
<div style="left:95px;top:502px;width:439.4px;height:1px;background:#dcdcdc"></div>
<div style="left:143px;top:485px;width:1px;height:18px;background:#dcdcdc"></div>
<div style="left:371px;top:485px;width:1px;height:18px;background:#dcdcdc"></div>
<div style="left:392.5px;top:485px;width:1px;height:18px;background:#dcdcdc"></div>
<div style="left:414.5px;top:485px;width:1px;height:18px;background:#dcdcdc"></div>
<div style="left:436.5px;top:485px;width:1px;height:18px;background:#dcdcdc"></div>
<div style="left:471.5px;top:485px;width:1px;height:18px;background:#dcdcdc"></div>
<div style="left:505.29999999999995px;top:485px;width:1px;height:18px;background:#dcdcdc"></div>
<div class="t" style="left:397.5px;top:487.89px;font-size:11px;line-height:11px;color:#000;">4</div>
<div class="t" style="left:419.5px;top:487.89px;font-size:11px;line-height:11px;color:#000;">40</div>
<div class="t" style="left:441.5px;top:487.89px;font-size:11px;line-height:11px;color:#000;">2.0</div>
<div class="t" style="left:476.5px;top:487.89px;font-size:11px;line-height:11px;color:#000;">3.0</div>
<div class="t" style="left:510.29999999999995px;top:487.89px;font-size:11px;line-height:11px;color:#000;">3.0</div>
<div style="left:95px;top:503px;width:439.4px;height:18px;background:#f0f0f0"></div>
<div style="left:95px;top:520px;width:439.4px;height:1px;background:#dcdcdc"></div>
<div style="left:143px;top:503px;width:1px;height:18px;background:#dcdcdc"></div>
<div style="left:371px;top:503px;width:1px;height:18px;background:#dcdcdc"></div>
<div style="left:392.5px;top:503px;width:1px;height:18px;background:#dcdcdc"></div>
<div style="left:414.5px;top:503px;width:1px;height:18px;background:#dcdcdc"></div>
<div style="left:436.5px;top:503px;width:1px;height:18px;background:#dcdcdc"></div>
<div style="left:471.5px;top:503px;width:1px;height:18px;background:#dcdcdc"></div>
<div style="left:505.29999999999995px;top:503px;width:1px;height:18px;background:#dcdcdc"></div>
<div style="left:74px;top:503px;width:20px;height:17px;background:#f0f0f0;border-right:1px solid #dcdcdc"></div>
<div style="left:95px;top:521px;width:439.4px;height:18px;background:#f0f0f0"></div>
<div style="left:95px;top:538px;width:439.4px;height:1px;background:#dcdcdc"></div>
<div style="left:143px;top:521px;width:1px;height:18px;background:#dcdcdc"></div>
<div style="left:371px;top:521px;width:1px;height:18px;background:#dcdcdc"></div>
<div style="left:392.5px;top:521px;width:1px;height:18px;background:#dcdcdc"></div>
<div style="left:414.5px;top:521px;width:1px;height:18px;background:#dcdcdc"></div>
<div style="left:436.5px;top:521px;width:1px;height:18px;background:#dcdcdc"></div>
<div style="left:471.5px;top:521px;width:1px;height:18px;background:#dcdcdc"></div>
<div style="left:505.29999999999995px;top:521px;width:1px;height:18px;background:#dcdcdc"></div>
<div style="left:74px;top:521px;width:20px;height:17px;background:#f0f0f0;border-right:1px solid #dcdcdc"></div>
<div style="left:95px;top:539px;width:439.4px;height:18px;background:#f0f0f0"></div>
<div style="left:95px;top:556px;width:439.4px;height:1px;background:#dcdcdc"></div>
<div style="left:143px;top:539px;width:1px;height:18px;background:#dcdcdc"></div>
<div style="left:371px;top:539px;width:1px;height:18px;background:#dcdcdc"></div>
<div style="left:392.5px;top:539px;width:1px;height:18px;background:#dcdcdc"></div>
<div style="left:414.5px;top:539px;width:1px;height:18px;background:#dcdcdc"></div>
<div style="left:436.5px;top:539px;width:1px;height:18px;background:#dcdcdc"></div>
<div style="left:471.5px;top:539px;width:1px;height:18px;background:#dcdcdc"></div>
<div style="left:505.29999999999995px;top:539px;width:1px;height:18px;background:#dcdcdc"></div>
<div style="left:74px;top:539px;width:20px;height:17px;background:#f0f0f0;border-right:1px solid #dcdcdc"></div>
<div style="left:95px;top:557px;width:439.4px;height:18px;background:#f0f0f0"></div>
<div style="left:95px;top:574px;width:439.4px;height:1px;background:#dcdcdc"></div>
<div style="left:143px;top:557px;width:1px;height:18px;background:#dcdcdc"></div>
<div style="left:371px;top:557px;width:1px;height:18px;background:#dcdcdc"></div>
<div style="left:392.5px;top:557px;width:1px;height:18px;background:#dcdcdc"></div>
<div style="left:414.5px;top:557px;width:1px;height:18px;background:#dcdcdc"></div>
<div style="left:436.5px;top:557px;width:1px;height:18px;background:#dcdcdc"></div>
<div style="left:471.5px;top:557px;width:1px;height:18px;background:#dcdcdc"></div>
<div style="left:505.29999999999995px;top:557px;width:1px;height:18px;background:#dcdcdc"></div>
<div style="left:74px;top:557px;width:20px;height:17px;background:#f0f0f0;border-right:1px solid #dcdcdc"></div>
<div style="left:95px;top:575px;width:439.4px;height:18px;background:#f0f0f0"></div>
<div style="left:95px;top:592px;width:439.4px;height:1px;background:#dcdcdc"></div>
<div style="left:143px;top:575px;width:1px;height:18px;background:#dcdcdc"></div>
<div style="left:371px;top:575px;width:1px;height:18px;background:#dcdcdc"></div>
<div style="left:392.5px;top:575px;width:1px;height:18px;background:#dcdcdc"></div>
<div style="left:414.5px;top:575px;width:1px;height:18px;background:#dcdcdc"></div>
<div style="left:436.5px;top:575px;width:1px;height:18px;background:#dcdcdc"></div>
<div style="left:471.5px;top:575px;width:1px;height:18px;background:#dcdcdc"></div>
<div style="left:505.29999999999995px;top:575px;width:1px;height:18px;background:#dcdcdc"></div>
<div style="left:74px;top:575px;width:20px;height:17px;background:#f0f0f0;border-right:1px solid #dcdcdc"></div>
<div style="left:95px;top:593px;width:439.4px;height:18px;background:#f0f0f0"></div>
<div style="left:95px;top:610px;width:439.4px;height:1px;background:#dcdcdc"></div>
<div style="left:143px;top:593px;width:1px;height:18px;background:#dcdcdc"></div>
<div style="left:371px;top:593px;width:1px;height:18px;background:#dcdcdc"></div>
<div style="left:392.5px;top:593px;width:1px;height:18px;background:#dcdcdc"></div>
<div style="left:414.5px;top:593px;width:1px;height:18px;background:#dcdcdc"></div>
<div style="left:436.5px;top:593px;width:1px;height:18px;background:#dcdcdc"></div>
<div style="left:471.5px;top:593px;width:1px;height:18px;background:#dcdcdc"></div>
<div style="left:505.29999999999995px;top:593px;width:1px;height:18px;background:#dcdcdc"></div>
<div style="left:74px;top:593px;width:20px;height:17px;background:#f0f0f0;border-right:1px solid #dcdcdc"></div>
<div style="left:95px;top:611px;width:439.4px;height:18px;background:#f0f0f0"></div>
<div style="left:95px;top:628px;width:439.4px;height:1px;background:#dcdcdc"></div>
<div style="left:143px;top:611px;width:1px;height:18px;background:#dcdcdc"></div>
<div style="left:371px;top:611px;width:1px;height:18px;background:#dcdcdc"></div>
<div style="left:392.5px;top:611px;width:1px;height:18px;background:#dcdcdc"></div>
<div style="left:414.5px;top:611px;width:1px;height:18px;background:#dcdcdc"></div>
<div style="left:436.5px;top:611px;width:1px;height:18px;background:#dcdcdc"></div>
<div style="left:471.5px;top:611px;width:1px;height:18px;background:#dcdcdc"></div>
<div style="left:505.29999999999995px;top:611px;width:1px;height:18px;background:#dcdcdc"></div>
<div style="left:74px;top:611px;width:20px;height:17px;background:#f0f0f0;border-right:1px solid #dcdcdc"></div>
<div style="left:95px;top:629px;width:439.4px;height:18px;background:#f0f0f0"></div>
<div style="left:95px;top:646px;width:439.4px;height:1px;background:#dcdcdc"></div>
<div style="left:143px;top:629px;width:1px;height:18px;background:#dcdcdc"></div>
<div style="left:371px;top:629px;width:1px;height:18px;background:#dcdcdc"></div>
<div style="left:392.5px;top:629px;width:1px;height:18px;background:#dcdcdc"></div>
<div style="left:414.5px;top:629px;width:1px;height:18px;background:#dcdcdc"></div>
<div style="left:436.5px;top:629px;width:1px;height:18px;background:#dcdcdc"></div>
<div style="left:471.5px;top:629px;width:1px;height:18px;background:#dcdcdc"></div>
<div style="left:505.29999999999995px;top:629px;width:1px;height:18px;background:#dcdcdc"></div>
<div style="left:74px;top:629px;width:20px;height:17px;background:#f0f0f0;border-right:1px solid #dcdcdc"></div>
<div style="left:95px;top:647px;width:439.4px;height:18px;background:#f0f0f0"></div>
<div style="left:95px;top:664px;width:439.4px;height:1px;background:#dcdcdc"></div>
<div style="left:143px;top:647px;width:1px;height:18px;background:#dcdcdc"></div>
<div style="left:371px;top:647px;width:1px;height:18px;background:#dcdcdc"></div>
<div style="left:392.5px;top:647px;width:1px;height:18px;background:#dcdcdc"></div>
<div style="left:414.5px;top:647px;width:1px;height:18px;background:#dcdcdc"></div>
<div style="left:436.5px;top:647px;width:1px;height:18px;background:#dcdcdc"></div>
<div style="left:471.5px;top:647px;width:1px;height:18px;background:#dcdcdc"></div>
<div style="left:505.29999999999995px;top:647px;width:1px;height:18px;background:#dcdcdc"></div>
<div style="left:74px;top:647px;width:20px;height:17px;background:#f0f0f0;border-right:1px solid #dcdcdc"></div>
<div style="left:95px;top:665px;width:439.4px;height:8px;background:#f0f0f0"></div>
<div style="left:143px;top:665px;width:1px;height:8px;background:#dcdcdc"></div>
<div style="left:371px;top:665px;width:1px;height:8px;background:#dcdcdc"></div>
<div style="left:392.5px;top:665px;width:1px;height:8px;background:#dcdcdc"></div>
<div style="left:414.5px;top:665px;width:1px;height:8px;background:#dcdcdc"></div>
<div style="left:436.5px;top:665px;width:1px;height:8px;background:#dcdcdc"></div>
<div style="left:471.5px;top:665px;width:1px;height:8px;background:#dcdcdc"></div>
<div style="left:505.29999999999995px;top:665px;width:1px;height:8px;background:#dcdcdc"></div>
<div style="left:74px;top:665px;width:20px;height:8px;background:#f0f0f0;border-right:1px solid #dcdcdc"></div>
<div class="t" style="left:77px;top:236.69px;font-size:11px;line-height:11px;color:#000;">ID</div>
<div class="t" style="left:148px;top:236.69px;font-size:11px;line-height:11px;color:#000;">Имя типа ЗА</div>
<div class="t" style="left:397.5px;top:236.69px;font-size:11px;line-height:11px;color:#000;">n</div>
<div class="t" style="left:419.5px;top:236.69px;font-size:11px;line-height:11px;color:#000;">d</div>
<div class="t" style="left:441.5px;top:236.69px;font-size:11px;line-height:11px;color:#000;">S</div>
<div class="t" style="left:476.5px;top:236.69px;font-size:11px;line-height:11px;color:#000;">ЗС1</div>
<div class="t" style="left:510.29999999999995px;top:236.69px;font-size:11px;line-height:11px;color:#000;">ЗС2</div>
<div style="left:534.4px;top:233px;width:9.600000000000023px;height:440px;background:#fff"></div>
<div style="left:534.4px;top:251px;width:9.600000000000023px;height:126px;background:#dadada"></div>
<svg style="position:absolute;left:534.4px;top:233px;" width="10" height="17" viewBox="0 0 10 17"><path d="M2.5 10.5L5 8L7.5 10.5" stroke="#444" stroke-width="1.2" fill="none"/></svg>
<svg style="position:absolute;left:539px;top:309px;" width="6" height="9" viewBox="0 0 6 9"><path d="M0 1H6M0 4.3H6M0 7.6H6" stroke="#606060" stroke-width="1.6"/></svg>
<div style="left:534.4px;top:655px;width:9.600000000000023px;height:1px;background:#c8c8c8"></div>
<div style="left:534.4px;top:672px;width:9.600000000000023px;height:1px;background:#c8c8c8"></div>
<svg style="position:absolute;left:534.4px;top:656px;" width="10" height="16" viewBox="0 0 10 16"><path d="M2.5 6.5L5 9L7.5 6.5" stroke="#444" stroke-width="1.2" fill="none"/></svg>
<div style="left:73px;top:673px;width:461.4px;height:9px;background:#fff"></div>
<div style="left:534.4px;top:673px;width:9.600000000000023px;height:9px;background:#f0f0f0"></div>
<div style="left:517px;top:673px;width:1px;height:9px;background:#c8c8c8"></div>
<div style="left:533px;top:673px;width:1px;height:9px;background:#c8c8c8"></div>
<svg style="position:absolute;left:518px;top:673px;" width="15" height="9" viewBox="0 0 15 9"><path d="M5 2L9 6" stroke="#333" stroke-width="1.3"/></svg>
<div style="left:557px;top:182px;width:340px;height:573px;background:#f0f0f0;border-left:1px solid #666"></div>
<div style="left:558px;top:182px;width:1px;height:573px;background:#fff"></div>
<div style="left:895px;top:182px;width:2px;height:573px;background:#6a7585"></div>
<div style="left:557px;top:753px;width:340px;height:2px;background:#6a7585"></div>
<div style="left:560px;top:186px;width:231px;height:21px;background:#fff;border:1px solid #7a7a7a;"></div>
<div class="t" style="left:566px;top:191.69px;font-size:11px;line-height:11px;color:#000;">Всі ліві стержні</div>
<div style="left:803px;top:186px;width:56px;height:20px;background:#f4f4f4;border-left:2px solid #7a7a7a;border-top:2px solid #7a7a7a;border-right:0;border-bottom:0"></div>
<div style="left:807px;top:190px;width:32px;height:13px;background:#b0106e;border:1px solid #555"></div>
<div style="left:844px;top:188px;width:14px;height:17px;background:#f0f0f0;border-left:1px solid #fff;border-top:1px solid #fff;border-right:2px solid #696969;border-bottom:2px solid #696969"></div>
<svg style="position:absolute;left:847px;top:194px;" width="10" height="6" viewBox="0 0 10 6"><path d="M0 0H10L5 5.5Z" fill="#000"/></svg>
<div style="left:625px;top:214px;width:27px;height:30px;background:#ececec;border-left:1px solid #fff;border-top:1px solid #fff;border-right:2px solid #6a6a6a;border-bottom:2px solid #6a6a6a"></div>
<svg style="position:absolute;left:625px;top:214px;" width="30" height="33" viewBox="0 0 30 33"><rect x="4" y="5" width="4" height="4" fill="#e51a1a"/><rect x="10" y="5" width="4" height="4" fill="#e51a1a"/><rect x="16" y="5" width="4" height="4" fill="#e51a1a"/><rect x="22" y="5" width="4" height="4" fill="#e51a1a"/><circle cx="6" cy="13" r="1.9" fill="#c8c8c8"/><circle cx="24" cy="13" r="1.9" fill="#c8c8c8"/><circle cx="6" cy="19" r="1.9" fill="#c8c8c8"/><circle cx="24" cy="19" r="1.9" fill="#c8c8c8"/><circle cx="6" cy="25" r="1.9" fill="#c8c8c8"/><circle cx="12" cy="25" r="1.9" fill="#c8c8c8"/><circle cx="18" cy="25" r="1.9" fill="#c8c8c8"/><circle cx="24" cy="25" r="1.9" fill="#c8c8c8"/></svg>
<div style="left:593px;top:249px;width:27px;height:30px;background:#f2f2f2;border-left:2px solid #6a6a6a;border-top:2px solid #6a6a6a;border-right:1px solid #fff;border-bottom:1px solid #fff"></div>
<svg style="position:absolute;left:593px;top:249px;" width="30" height="33" viewBox="0 0 30 33"><rect x="4" y="5" width="4" height="4" fill="#e51a1a"/><circle cx="12" cy="7" r="1.9" fill="#c8c8c8"/><circle cx="18" cy="7" r="1.9" fill="#c8c8c8"/><circle cx="24" cy="7" r="1.9" fill="#c8c8c8"/><rect x="4" y="11" width="4" height="4" fill="#e51a1a"/><circle cx="24" cy="13" r="1.9" fill="#c8c8c8"/><rect x="4" y="17" width="4" height="4" fill="#e51a1a"/><circle cx="24" cy="19" r="1.9" fill="#c8c8c8"/><rect x="4" y="23" width="4" height="4" fill="#e51a1a"/><circle cx="12" cy="25" r="1.9" fill="#c8c8c8"/><circle cx="18" cy="25" r="1.9" fill="#c8c8c8"/><circle cx="24" cy="25" r="1.9" fill="#c8c8c8"/></svg>
<div style="left:625px;top:249px;width:27px;height:30px;background:#ececec;border-left:1px solid #fff;border-top:1px solid #fff;border-right:2px solid #6a6a6a;border-bottom:2px solid #6a6a6a"></div>
<svg style="position:absolute;left:625px;top:249px;" width="30" height="33" viewBox="0 0 30 33"><rect x="4" y="5" width="4" height="4" fill="#e51a1a"/><rect x="10" y="5" width="4" height="4" fill="#e51a1a"/><rect x="16" y="5" width="4" height="4" fill="#e51a1a"/><rect x="22" y="5" width="4" height="4" fill="#e51a1a"/><rect x="4" y="11" width="4" height="4" fill="#e51a1a"/><rect x="22" y="11" width="4" height="4" fill="#e51a1a"/><rect x="4" y="17" width="4" height="4" fill="#e51a1a"/><rect x="22" y="17" width="4" height="4" fill="#e51a1a"/><rect x="4" y="23" width="4" height="4" fill="#e51a1a"/><rect x="10" y="23" width="4" height="4" fill="#e51a1a"/><rect x="16" y="23" width="4" height="4" fill="#e51a1a"/><rect x="22" y="23" width="4" height="4" fill="#e51a1a"/></svg>
<div style="left:658px;top:249px;width:27px;height:30px;background:#ececec;border-left:1px solid #fff;border-top:1px solid #fff;border-right:2px solid #6a6a6a;border-bottom:2px solid #6a6a6a"></div>
<svg style="position:absolute;left:658px;top:249px;" width="30" height="33" viewBox="0 0 30 33"><circle cx="6" cy="7" r="1.9" fill="#c8c8c8"/><circle cx="12" cy="7" r="1.9" fill="#c8c8c8"/><circle cx="18" cy="7" r="1.9" fill="#c8c8c8"/><rect x="22" y="5" width="4" height="4" fill="#e51a1a"/><circle cx="6" cy="13" r="1.9" fill="#c8c8c8"/><rect x="22" y="11" width="4" height="4" fill="#e51a1a"/><circle cx="6" cy="19" r="1.9" fill="#c8c8c8"/><rect x="22" y="17" width="4" height="4" fill="#e51a1a"/><circle cx="6" cy="25" r="1.9" fill="#c8c8c8"/><circle cx="12" cy="25" r="1.9" fill="#c8c8c8"/><circle cx="18" cy="25" r="1.9" fill="#c8c8c8"/><rect x="22" y="23" width="4" height="4" fill="#e51a1a"/></svg>
<div style="left:625px;top:285px;width:27px;height:30px;background:#ececec;border-left:1px solid #fff;border-top:1px solid #fff;border-right:2px solid #6a6a6a;border-bottom:2px solid #6a6a6a"></div>
<svg style="position:absolute;left:625px;top:285px;" width="30" height="33" viewBox="0 0 30 33"><circle cx="6" cy="7" r="1.9" fill="#c8c8c8"/><circle cx="12" cy="7" r="1.9" fill="#c8c8c8"/><circle cx="18" cy="7" r="1.9" fill="#c8c8c8"/><circle cx="24" cy="7" r="1.9" fill="#c8c8c8"/><circle cx="6" cy="13" r="1.9" fill="#c8c8c8"/><circle cx="24" cy="13" r="1.9" fill="#c8c8c8"/><circle cx="6" cy="19" r="1.9" fill="#c8c8c8"/><circle cx="24" cy="19" r="1.9" fill="#c8c8c8"/><rect x="4" y="23" width="4" height="4" fill="#e51a1a"/><rect x="10" y="23" width="4" height="4" fill="#e51a1a"/><rect x="16" y="23" width="4" height="4" fill="#e51a1a"/><rect x="22" y="23" width="4" height="4" fill="#e51a1a"/></svg>
<div style="left:790px;top:214px;width:27px;height:30px;background:#ececec;border-left:1px solid #fff;border-top:1px solid #fff;border-right:2px solid #6a6a6a;border-bottom:2px solid #6a6a6a"></div>
<svg style="position:absolute;left:790px;top:214px;" width="30" height="33" viewBox="0 0 30 33"><rect x="4" y="5" width="4" height="4" fill="#e51a1a"/><circle cx="12" cy="7" r="1.9" fill="#c8c8c8"/><circle cx="18" cy="7" r="1.9" fill="#c8c8c8"/><rect x="22" y="5" width="4" height="4" fill="#e51a1a"/><circle cx="6" cy="13" r="1.9" fill="#c8c8c8"/><circle cx="24" cy="13" r="1.9" fill="#c8c8c8"/><circle cx="6" cy="19" r="1.9" fill="#c8c8c8"/><circle cx="24" cy="19" r="1.9" fill="#c8c8c8"/><circle cx="6" cy="25" r="1.9" fill="#c8c8c8"/><circle cx="12" cy="25" r="1.9" fill="#c8c8c8"/><circle cx="18" cy="25" r="1.9" fill="#c8c8c8"/><circle cx="24" cy="25" r="1.9" fill="#c8c8c8"/></svg>
<div style="left:758px;top:249px;width:27px;height:30px;background:#ececec;border-left:1px solid #fff;border-top:1px solid #fff;border-right:2px solid #6a6a6a;border-bottom:2px solid #6a6a6a"></div>
<svg style="position:absolute;left:758px;top:249px;" width="30" height="33" viewBox="0 0 30 33"><rect x="4" y="5" width="4" height="4" fill="#e51a1a"/><circle cx="12" cy="7" r="1.9" fill="#c8c8c8"/><circle cx="18" cy="7" r="1.9" fill="#c8c8c8"/><circle cx="24" cy="7" r="1.9" fill="#c8c8c8"/><circle cx="6" cy="13" r="1.9" fill="#c8c8c8"/><circle cx="24" cy="13" r="1.9" fill="#c8c8c8"/><circle cx="6" cy="19" r="1.9" fill="#c8c8c8"/><circle cx="24" cy="19" r="1.9" fill="#c8c8c8"/><rect x="4" y="23" width="4" height="4" fill="#e51a1a"/><circle cx="12" cy="25" r="1.9" fill="#c8c8c8"/><circle cx="18" cy="25" r="1.9" fill="#c8c8c8"/><circle cx="24" cy="25" r="1.9" fill="#c8c8c8"/></svg>
<div style="left:790px;top:249px;width:27px;height:30px;background:#ececec;border-left:1px solid #fff;border-top:1px solid #fff;border-right:2px solid #6a6a6a;border-bottom:2px solid #6a6a6a"></div>
<svg style="position:absolute;left:790px;top:249px;" width="30" height="33" viewBox="0 0 30 33"><rect x="4" y="5" width="4" height="4" fill="#e51a1a"/><circle cx="12" cy="7" r="1.9" fill="#c8c8c8"/><circle cx="18" cy="7" r="1.9" fill="#c8c8c8"/><rect x="22" y="5" width="4" height="4" fill="#e51a1a"/><circle cx="6" cy="13" r="1.9" fill="#c8c8c8"/><circle cx="24" cy="13" r="1.9" fill="#c8c8c8"/><circle cx="6" cy="19" r="1.9" fill="#c8c8c8"/><circle cx="24" cy="19" r="1.9" fill="#c8c8c8"/><rect x="4" y="23" width="4" height="4" fill="#e51a1a"/><circle cx="12" cy="25" r="1.9" fill="#c8c8c8"/><circle cx="18" cy="25" r="1.9" fill="#c8c8c8"/><rect x="22" y="23" width="4" height="4" fill="#e51a1a"/></svg>
<div style="left:821px;top:249px;width:27px;height:30px;background:#ececec;border-left:1px solid #fff;border-top:1px solid #fff;border-right:2px solid #6a6a6a;border-bottom:2px solid #6a6a6a"></div>
<svg style="position:absolute;left:821px;top:249px;" width="30" height="33" viewBox="0 0 30 33"><circle cx="6" cy="7" r="1.9" fill="#c8c8c8"/><circle cx="12" cy="7" r="1.9" fill="#c8c8c8"/><circle cx="18" cy="7" r="1.9" fill="#c8c8c8"/><rect x="22" y="5" width="4" height="4" fill="#e51a1a"/><circle cx="6" cy="13" r="1.9" fill="#c8c8c8"/><circle cx="24" cy="13" r="1.9" fill="#c8c8c8"/><circle cx="6" cy="19" r="1.9" fill="#c8c8c8"/><circle cx="24" cy="19" r="1.9" fill="#c8c8c8"/><circle cx="6" cy="25" r="1.9" fill="#c8c8c8"/><circle cx="12" cy="25" r="1.9" fill="#c8c8c8"/><circle cx="18" cy="25" r="1.9" fill="#c8c8c8"/><rect x="22" y="23" width="4" height="4" fill="#e51a1a"/></svg>
<div style="left:790px;top:285px;width:27px;height:30px;background:#ececec;border-left:1px solid #fff;border-top:1px solid #fff;border-right:2px solid #6a6a6a;border-bottom:2px solid #6a6a6a"></div>
<svg style="position:absolute;left:790px;top:285px;" width="30" height="33" viewBox="0 0 30 33"><circle cx="6" cy="7" r="1.9" fill="#c8c8c8"/><circle cx="12" cy="7" r="1.9" fill="#c8c8c8"/><circle cx="18" cy="7" r="1.9" fill="#c8c8c8"/><circle cx="24" cy="7" r="1.9" fill="#c8c8c8"/><circle cx="6" cy="13" r="1.9" fill="#c8c8c8"/><circle cx="24" cy="13" r="1.9" fill="#c8c8c8"/><circle cx="6" cy="19" r="1.9" fill="#c8c8c8"/><circle cx="24" cy="19" r="1.9" fill="#c8c8c8"/><rect x="4" y="23" width="4" height="4" fill="#e51a1a"/><circle cx="12" cy="25" r="1.9" fill="#c8c8c8"/><circle cx="18" cy="25" r="1.9" fill="#c8c8c8"/><rect x="22" y="23" width="4" height="4" fill="#e51a1a"/></svg>
<div style="left:625px;top:327px;width:27px;height:30px;background:#ececec;border-left:1px solid #fff;border-top:1px solid #fff;border-right:2px solid #6a6a6a;border-bottom:2px solid #6a6a6a"></div>
<svg style="position:absolute;left:625px;top:327px;" width="30" height="33" viewBox="0 0 30 33"><circle cx="6" cy="7" r="1.9" fill="#c8c8c8"/><rect x="10" y="5" width="4" height="4" fill="#e51a1a"/><rect x="16" y="5" width="4" height="4" fill="#e51a1a"/><circle cx="24" cy="7" r="1.9" fill="#c8c8c8"/><circle cx="6" cy="13" r="1.9" fill="#c8c8c8"/><circle cx="24" cy="13" r="1.9" fill="#c8c8c8"/><circle cx="6" cy="19" r="1.9" fill="#c8c8c8"/><circle cx="24" cy="19" r="1.9" fill="#c8c8c8"/><circle cx="6" cy="25" r="1.9" fill="#c8c8c8"/><circle cx="12" cy="25" r="1.9" fill="#c8c8c8"/><circle cx="18" cy="25" r="1.9" fill="#c8c8c8"/><circle cx="24" cy="25" r="1.9" fill="#c8c8c8"/></svg>
<div style="left:593px;top:363px;width:27px;height:30px;background:#ececec;border-left:1px solid #fff;border-top:1px solid #fff;border-right:2px solid #6a6a6a;border-bottom:2px solid #6a6a6a"></div>
<svg style="position:absolute;left:593px;top:363px;" width="30" height="33" viewBox="0 0 30 33"><circle cx="6" cy="7" r="1.9" fill="#c8c8c8"/><circle cx="12" cy="7" r="1.9" fill="#c8c8c8"/><circle cx="18" cy="7" r="1.9" fill="#c8c8c8"/><circle cx="24" cy="7" r="1.9" fill="#c8c8c8"/><rect x="4" y="11" width="4" height="4" fill="#e51a1a"/><circle cx="24" cy="13" r="1.9" fill="#c8c8c8"/><rect x="4" y="17" width="4" height="4" fill="#e51a1a"/><circle cx="24" cy="19" r="1.9" fill="#c8c8c8"/><circle cx="6" cy="25" r="1.9" fill="#c8c8c8"/><circle cx="12" cy="25" r="1.9" fill="#c8c8c8"/><circle cx="18" cy="25" r="1.9" fill="#c8c8c8"/><circle cx="24" cy="25" r="1.9" fill="#c8c8c8"/></svg>
<div style="left:625px;top:363px;width:27px;height:30px;background:#ececec;border-left:1px solid #fff;border-top:1px solid #fff;border-right:2px solid #6a6a6a;border-bottom:2px solid #6a6a6a"></div>
<svg style="position:absolute;left:625px;top:363px;" width="30" height="33" viewBox="0 0 30 33"><circle cx="6" cy="7" r="1.9" fill="#c8c8c8"/><rect x="10" y="5" width="4" height="4" fill="#e51a1a"/><rect x="16" y="5" width="4" height="4" fill="#e51a1a"/><circle cx="24" cy="7" r="1.9" fill="#c8c8c8"/><rect x="4" y="11" width="4" height="4" fill="#e51a1a"/><rect x="22" y="11" width="4" height="4" fill="#e51a1a"/><rect x="4" y="17" width="4" height="4" fill="#e51a1a"/><rect x="22" y="17" width="4" height="4" fill="#e51a1a"/><circle cx="6" cy="25" r="1.9" fill="#c8c8c8"/><rect x="10" y="23" width="4" height="4" fill="#e51a1a"/><rect x="16" y="23" width="4" height="4" fill="#e51a1a"/><circle cx="24" cy="25" r="1.9" fill="#c8c8c8"/></svg>
<div style="left:658px;top:363px;width:27px;height:30px;background:#ececec;border-left:1px solid #fff;border-top:1px solid #fff;border-right:2px solid #6a6a6a;border-bottom:2px solid #6a6a6a"></div>
<svg style="position:absolute;left:658px;top:363px;" width="30" height="33" viewBox="0 0 30 33"><circle cx="6" cy="7" r="1.9" fill="#c8c8c8"/><circle cx="12" cy="7" r="1.9" fill="#c8c8c8"/><circle cx="18" cy="7" r="1.9" fill="#c8c8c8"/><circle cx="24" cy="7" r="1.9" fill="#c8c8c8"/><circle cx="6" cy="13" r="1.9" fill="#c8c8c8"/><rect x="22" y="11" width="4" height="4" fill="#e51a1a"/><circle cx="6" cy="19" r="1.9" fill="#c8c8c8"/><rect x="22" y="17" width="4" height="4" fill="#e51a1a"/><circle cx="6" cy="25" r="1.9" fill="#c8c8c8"/><circle cx="12" cy="25" r="1.9" fill="#c8c8c8"/><circle cx="18" cy="25" r="1.9" fill="#c8c8c8"/><circle cx="24" cy="25" r="1.9" fill="#c8c8c8"/></svg>
<div style="left:625px;top:397px;width:27px;height:30px;background:#ececec;border-left:1px solid #fff;border-top:1px solid #fff;border-right:2px solid #6a6a6a;border-bottom:2px solid #6a6a6a"></div>
<svg style="position:absolute;left:625px;top:397px;" width="30" height="33" viewBox="0 0 30 33"><circle cx="6" cy="7" r="1.9" fill="#c8c8c8"/><circle cx="12" cy="7" r="1.9" fill="#c8c8c8"/><circle cx="18" cy="7" r="1.9" fill="#c8c8c8"/><circle cx="24" cy="7" r="1.9" fill="#c8c8c8"/><circle cx="6" cy="13" r="1.9" fill="#c8c8c8"/><circle cx="24" cy="13" r="1.9" fill="#c8c8c8"/><circle cx="6" cy="19" r="1.9" fill="#c8c8c8"/><circle cx="24" cy="19" r="1.9" fill="#c8c8c8"/><circle cx="6" cy="25" r="1.9" fill="#c8c8c8"/><rect x="10" y="23" width="4" height="4" fill="#e51a1a"/><rect x="16" y="23" width="4" height="4" fill="#e51a1a"/><circle cx="24" cy="25" r="1.9" fill="#c8c8c8"/></svg>
<div style="left:715px;top:308px;width:27px;height:30px;background:#ececec;border-left:1px solid #fff;border-top:1px solid #fff;border-right:2px solid #6a6a6a;border-bottom:2px solid #6a6a6a"></div>
<svg style="position:absolute;left:715px;top:308px;" width="30" height="33" viewBox="0 0 30 33"></svg>
<svg style="position:absolute;left:715px;top:308px;" width="30" height="33" viewBox="0 0 30 33"><rect x="4.5" y="5.5" width="21" height="21" rx="4" fill="#eee" stroke="#1a8fd0" stroke-width="2.6"/><rect x="6.0" y="7" width="2.5" height="2.5" fill="#e51a1a"/><rect x="6.0" y="22.5" width="2.5" height="2.5" fill="#e51a1a"/><rect x="6" y="7.0" width="2.5" height="2.5" fill="#e51a1a"/><rect x="21.5" y="7.0" width="2.5" height="2.5" fill="#e51a1a"/><rect x="10.2" y="7" width="2.5" height="2.5" fill="#e51a1a"/><rect x="10.2" y="22.5" width="2.5" height="2.5" fill="#e51a1a"/><rect x="6" y="11.2" width="2.5" height="2.5" fill="#e51a1a"/><rect x="21.5" y="11.2" width="2.5" height="2.5" fill="#e51a1a"/><rect x="14.4" y="7" width="2.5" height="2.5" fill="#e51a1a"/><rect x="14.4" y="22.5" width="2.5" height="2.5" fill="#e51a1a"/><rect x="6" y="15.4" width="2.5" height="2.5" fill="#e51a1a"/><rect x="21.5" y="15.4" width="2.5" height="2.5" fill="#e51a1a"/><rect x="18.6" y="7" width="2.5" height="2.5" fill="#e51a1a"/><rect x="18.6" y="22.5" width="2.5" height="2.5" fill="#e51a1a"/><rect x="6" y="19.6" width="2.5" height="2.5" fill="#e51a1a"/><rect x="21.5" y="19.6" width="2.5" height="2.5" fill="#e51a1a"/><rect x="22.8" y="7" width="2.5" height="2.5" fill="#e51a1a"/><rect x="22.8" y="22.5" width="2.5" height="2.5" fill="#e51a1a"/><rect x="6" y="23.8" width="2.5" height="2.5" fill="#e51a1a"/><rect x="21.5" y="23.8" width="2.5" height="2.5" fill="#e51a1a"/></svg>
<div style="left:790px;top:327px;width:27px;height:30px;background:#ececec;border-left:1px solid #fff;border-top:1px solid #fff;border-right:2px solid #6a6a6a;border-bottom:2px solid #6a6a6a"></div>
<svg style="position:absolute;left:790px;top:327px;" width="30" height="33" viewBox="0 0 30 33"></svg>
<svg style="position:absolute;left:790px;top:327px;" width="30" height="33" viewBox="0 0 30 33"><rect x="4.5" y="5.5" width="21" height="21" rx="4" fill="none" stroke="#1a8fd0" stroke-width="2"/><path d="M8 8V14M5 11H11" stroke="#1a8fd0" stroke-width="2"/><circle cx="7" cy="9" r="2" fill="#fff" stroke="#1a8fd0" stroke-width="1"/></svg>
<div style="left:790px;top:363px;width:27px;height:30px;background:#ececec;border-left:1px solid #fff;border-top:1px solid #fff;border-right:2px solid #6a6a6a;border-bottom:2px solid #6a6a6a"></div>
<svg style="position:absolute;left:790px;top:363px;" width="30" height="33" viewBox="0 0 30 33"></svg>
<svg style="position:absolute;left:790px;top:363px;" width="30" height="33" viewBox="0 0 30 33"><path d="M4 6H26M4 25.5H26" stroke="#1a8fd0" stroke-width="2"/></svg>
<div style="left:790px;top:397px;width:27px;height:30px;background:#ececec;border-left:1px solid #fff;border-top:1px solid #fff;border-right:2px solid #6a6a6a;border-bottom:2px solid #6a6a6a"></div>
<svg style="position:absolute;left:790px;top:397px;" width="30" height="33" viewBox="0 0 30 33"></svg>
<svg style="position:absolute;left:790px;top:397px;" width="30" height="33" viewBox="0 0 30 33"><path d="M5 5V27M25 5V27" stroke="#1a8fd0" stroke-width="2"/></svg>
<svg style="position:absolute;left:567px;top:457px;" width="13" height="13" viewBox="0 0 13 13"><circle cx="6.5" cy="6.5" r="6" fill="#fff" stroke="#333"/><circle cx="6.5" cy="6.5" r="3.5" fill="#1a1a1a"/></svg>
<div class="t" style="left:584px;top:458.69px;font-size:11px;line-height:11px;color:#000;">Ø</div>
<div style="left:607px;top:453px;width:34px;height:19px;background:#e5e5e5;border:1px solid #adadad"></div>
<div class="t" style="left:612px;top:458.69px;font-size:11px;line-height:11px;color:#000;">16</div>
<svg style="position:absolute;left:630px;top:460.5px;" width="9" height="6" viewBox="0 0 9 6"><path d="M0.5 0.5L4.5 4.5L8.5 0.5" stroke="#555" stroke-width="1" fill="none"/></svg>
<div class="t" style="left:646px;top:458.69px;font-size:11px;line-height:11px;color:#000;">мм</div>
<svg style="position:absolute;left:674px;top:457px;" width="13" height="13" viewBox="0 0 13 13"><circle cx="6.5" cy="6.5" r="6" fill="#fff" stroke="#333"/></svg>
<div class="t" style="left:691px;top:458.69px;font-size:11px;line-height:11px;color:#000;">As</div>
<div style="left:715px;top:453px;width:33px;height:21px;background:#f0f0f0;border:1px solid #ccc"></div>
<div class="t" style="left:719px;top:458.69px;font-size:11px;line-height:11px;color:#909090;">2.011</div>
<svg style="position:absolute;left:760px;top:457px;" width="13" height="13" viewBox="0 0 13 13"><circle cx="6.5" cy="6.5" r="6" fill="#fff" stroke="#333"/></svg>
<div class="t" style="left:776px;top:458.69px;font-size:11px;line-height:11px;color:#000;">ΣAs</div>
<div style="left:803px;top:453px;width:33px;height:21px;background:#f0f0f0;border:1px solid #ccc"></div>
<div class="t" style="left:809px;top:457.69px;font-size:11px;line-height:11px;color:#8080a0;">0</div>
<div class="t" style="left:845px;top:459.69px;font-size:11px;line-height:11px;color:#000;">см2</div>
<div class="t" style="left:570px;top:484.69px;font-size:11px;line-height:11px;color:#000;">Кільк.</div>
<div style="left:607px;top:479px;width:33px;height:21px;background:#fff;border:1px solid #7a7a7a;"></div>
<div class="t" style="left:612px;top:484.69px;font-size:11px;line-height:11px;color:#000;">4</div>
<svg style="position:absolute;left:567px;top:507px;" width="13" height="13" viewBox="0 0 13 13"><circle cx="6.5" cy="6.5" r="6" fill="#fff" stroke="#333"/></svg>
<div class="t" style="left:581px;top:508.69px;font-size:11px;line-height:11px;color:#000;">З матеріалів - М</div>
<svg style="position:absolute;left:567px;top:525px;" width="13" height="13" viewBox="0 0 13 13"><circle cx="6.5" cy="6.5" r="6" fill="#fff" stroke="#333"/><circle cx="6.5" cy="6.5" r="3.5" fill="#1a1a1a"/></svg>
<div class="t" style="left:581px;top:526.69px;font-size:11px;line-height:11px;color:#000;">Захисний шар - ЗШ</div>
<svg style="position:absolute;left:567px;top:543px;" width="13" height="13" viewBox="0 0 13 13"><circle cx="6.5" cy="6.5" r="6" fill="#fff" stroke="#333"/></svg>
<div class="t" style="left:581px;top:544.69px;font-size:11px;line-height:11px;color:#000;">Відстань до ц.в. - ЦВ</div>
<div class="t" style="left:577px;top:567.69px;font-size:11px;line-height:11px;color:#000;">c</div>
<div style="left:592px;top:562px;width:34px;height:19px;background:#fff;border:1px solid #7a7a7a;"></div>
<div class="t" style="left:597px;top:567.69px;font-size:11px;line-height:11px;color:#000;">3</div>
<div class="t" style="left:633px;top:567.69px;font-size:11px;line-height:11px;color:#000;">см</div>
<div class="t" style="left:660px;top:567.69px;font-size:11px;line-height:11px;color:#000;">c_s</div>
<div style="left:682px;top:562px;width:34px;height:19px;background:#fff;border:1px solid #7a7a7a;"></div>
<div class="t" style="left:687px;top:567.69px;font-size:11px;line-height:11px;color:#000;">3</div>
<div class="t" style="left:722px;top:567.69px;font-size:11px;line-height:11px;color:#000;">см</div>
<div style="left:567px;top:634px;width:11px;height:11px;background:#fff;border:1px solid #333"></div>
<div class="t" style="left:582px;top:635.69px;font-size:11px;line-height:11px;color:#000;">Встановити симетрично</div>
<div style="left:776px;top:625px;width:83px;height:20px;background:#e1e1e1;border:1px solid #adadad;border-right-color:#7a7a7a;border-bottom-color:#7a7a7a;"></div>
<div class="t" style="left:718.0px;width:200px;text-align:center;top:630.69px;font-size:11px;line-height:11px;color:#000;">Перегляд</div>
<div style="left:567px;top:690px;width:11px;height:11px;background:#fff;border:1px solid #333"></div>
<div style="left:589px;top:688px;width:166px;height:18px;background:#cccccc"></div>
<div class="t" style="left:572.0px;width:200px;text-align:center;top:691.69px;font-size:11px;line-height:11px;color:#a0a0a0;">Урахування фіз. нелінійності</div>
<div style="left:772px;top:690px;width:11px;height:11px;background:#fff;border:1px solid #333"></div>
<div class="t" style="left:787px;top:691.69px;font-size:11px;line-height:11px;color:#000;">Точний тип ЗА</div>
<div style="left:689px;top:719px;width:27px;height:23px;background:#f0f0f0;border-left:1px solid #fff;border-top:1px solid #fff;border-right:2px solid #696969;border-bottom:2px solid #696969"></div>
<svg style="position:absolute;left:696px;top:724px;" width="16" height="16" viewBox="0 0 16 16"><path d="M6 1H10V6H15V10H10V15H6V10H1V6H6Z" fill="#1a2a7a"/></svg>
<div style="left:727px;top:719px;width:27px;height:23px;background:#f0f0f0;border-left:1px solid #fff;border-top:1px solid #fff;border-right:2px solid #696969;border-bottom:2px solid #696969"></div>
<svg style="position:absolute;left:731px;top:723px;" width="22" height="18" viewBox="0 0 22 18"><path d="M5 9L9 14L18 3" stroke="#4a9a3a" stroke-width="3" fill="none"/><path d="M3 15h1M5 15h1M7 15h1" stroke="#555" stroke-width="1"/></svg>
<svg style="position:absolute;left:765px;top:485px;" width="100" height="130" viewBox="0 0 100 130"><defs><linearGradient id="rg" x1="0" y1="0" x2="1" y2="1"><stop offset="0" stop-color="#dcdcdc"/><stop offset="1" stop-color="#c0c0c0"/></linearGradient><radialGradient id="rd2" cx="0.35" cy="0.35" r="0.7"><stop offset="0" stop-color="#f04040"/><stop offset="1" stop-color="#b01010"/></radialGradient></defs><rect x="22" y="12" width="67" height="100" fill="url(#rg)" stroke="#1e4444" stroke-width="2"/><circle cx="31.200000000000045" cy="21.30000000000001" r="4.3" fill="url(#rd2)"/><circle cx="31.200000000000045" cy="47.39999999999998" r="4.3" fill="url(#rd2)"/><circle cx="31.200000000000045" cy="75.10000000000002" r="4.3" fill="url(#rd2)"/><circle cx="31.200000000000045" cy="102.39999999999998" r="4.3" fill="url(#rd2)"/><line x1="55.5" y1="6" x2="55.5" y2="61" stroke="#e02020" stroke-width="1"/><line x1="16" y1="61" x2="55.5" y2="61" stroke="#1a8fd0" stroke-width="1"/><circle cx="57" cy="75" r="5" fill="none" stroke="#222" stroke-width="1"/><line x1="51" y1="81" x2="64" y2="69" stroke="#222" stroke-width="1"/><path d="M35 97L48 83H65" stroke="#222" stroke-width="0.9" fill="none"/><path d="M9 106H27M9 112H22M12 103V115" stroke="#333" stroke-width="0.8" fill="none"/><path d="M21 113V125M27 106V125M18 122H31" stroke="#333" stroke-width="0.8" fill="none"/><text x="7" y="102" font-family="Liberation Serif" font-weight="bold" font-size="16" fill="#222">c</text><text x="33" y="125" font-family="Liberation Serif" font-weight="bold" font-size="16" fill="#222">c_s</text></svg>
<div style="left:65px;top:720px;width:21px;height:23px;background:#f0f0f0;border-left:1px solid #fff;border-top:1px solid #fff;border-right:2px solid #696969;border-bottom:2px solid #696969"></div>
<div style="left:113px;top:720px;width:21px;height:23px;background:#f0f0f0;border-left:1px solid #fff;border-top:1px solid #fff;border-right:2px solid #696969;border-bottom:2px solid #696969"></div>
<div style="left:161px;top:720px;width:21px;height:23px;background:#f0f0f0;border-left:1px solid #fff;border-top:1px solid #fff;border-right:2px solid #696969;border-bottom:2px solid #696969"></div>
<div style="left:209px;top:720px;width:21px;height:23px;background:#f0f0f0;border-left:1px solid #fff;border-top:1px solid #fff;border-right:2px solid #696969;border-bottom:2px solid #696969"></div>
<div style="left:257px;top:720px;width:21px;height:23px;background:#f0f0f0;border-left:1px solid #fff;border-top:1px solid #fff;border-right:2px solid #696969;border-bottom:2px solid #696969"></div>
<div style="left:344px;top:720px;width:21px;height:23px;background:#f0f0f0;border-left:1px solid #fff;border-top:1px solid #fff;border-right:2px solid #696969;border-bottom:2px solid #696969"></div>
<div style="left:392px;top:720px;width:21px;height:23px;background:#f0f0f0;border-left:1px solid #fff;border-top:1px solid #fff;border-right:2px solid #696969;border-bottom:2px solid #696969"></div>
<div style="left:424px;top:720px;width:21px;height:23px;background:#f0f0f0;border-left:1px solid #fff;border-top:1px solid #fff;border-right:2px solid #696969;border-bottom:2px solid #696969"></div>
<div style="left:456px;top:720px;width:21px;height:23px;background:#f0f0f0;border-left:1px solid #fff;border-top:1px solid #fff;border-right:2px solid #696969;border-bottom:2px solid #696969"></div>
<div style="left:488px;top:720px;width:21px;height:23px;background:#f0f0f0;border-left:1px solid #fff;border-top:1px solid #fff;border-right:2px solid #696969;border-bottom:2px solid #696969"></div>
<div style="left:520px;top:720px;width:21px;height:23px;background:#f0f0f0;border-left:1px solid #fff;border-top:1px solid #fff;border-right:2px solid #696969;border-bottom:2px solid #696969"></div>
<svg style="position:absolute;left:65px;top:720px;" width="24" height="26" viewBox="0 0 24 26"><path d="M6 13L10 18L18 7" stroke="#3a9a3a" stroke-width="2.8" fill="none"/></svg>
<svg style="position:absolute;left:113px;top:720px;" width="24" height="26" viewBox="0 0 24 26"><path d="M6 4H9.5V8H13.5V11.5H9.5V15.5H6V11.5H2V8H6Z" fill="#1a2a5a"/><path d="M12.5 9H16V13H20V16.5H16V20.5H12.5V16.5H8.5V13H12.5Z" fill="#2a4aa0"/></svg>
<svg style="position:absolute;left:161px;top:720px;" width="24" height="26" viewBox="0 0 24 26"><rect x="4" y="5" width="16" height="16" fill="none" stroke="#444" stroke-dasharray="1.5 1.5"/><rect x="6" y="7" width="8" height="7" fill="#8ab8d8" stroke="#335"/><rect x="10" y="12" width="8" height="7" fill="#4a78b8" stroke="#335"/><rect x="7" y="9" width="2" height="2" fill="#e22"/><rect x="11" y="9" width="2" height="2" fill="#e22"/></svg>
<svg style="position:absolute;left:209px;top:720px;" width="24" height="26" viewBox="0 0 24 26"><path d="M7 4L14 16M17 4L10 16" stroke="#555" stroke-width="1.2"/><ellipse cx="8" cy="19" rx="3" ry="3.5" fill="none" stroke="#1a8fd0" stroke-width="2"/><ellipse cx="16" cy="19" rx="3" ry="3.5" fill="none" stroke="#1a8fd0" stroke-width="2"/></svg>
<svg style="position:absolute;left:257px;top:720px;" width="24" height="26" viewBox="0 0 24 26"><rect x="4" y="5" width="10" height="10" fill="none" stroke="#888" stroke-dasharray="1.5 1.5"/><rect x="6" y="7" width="5" height="5" fill="#c8d8e0" stroke="#999"/><path d="M11 15V21M8 18H14" stroke="#e88" stroke-width="2"/><rect x="15" y="16" width="5" height="5" fill="#c8d8e0" stroke="#999"/></svg>
<svg style="position:absolute;left:344px;top:720px;" width="24" height="26" viewBox="0 0 24 26"><path d="M4 6H17M4 9H17M4 12H17M4 15H11M4 18H11" stroke="#555" stroke-width="1.3"/><path d="M4 15H11M4 18H11" stroke="#e88" stroke-width="1.3"/><path d="M11 12L19 21M19 12L11 21" stroke="#e22" stroke-width="2"/></svg>
<svg style="position:absolute;left:392px;top:720px;" width="24" height="26" viewBox="0 0 24 26"><path d="M4 5H18L20 7V21H4Z" fill="#222"/><rect x="7" y="6" width="10" height="6" fill="#cfe0ef"/><rect x="8" y="16" width="8" height="5" fill="#bbb"/></svg>
<svg style="position:absolute;left:424px;top:720px;" width="24" height="26" viewBox="0 0 24 26"><rect x="5" y="4" width="15" height="12" fill="#eee" stroke="#889"/><rect x="5" y="4" width="15" height="2" fill="#99b"/><rect x="10" y="12" width="10" height="9" fill="#f0c860" stroke="#c8a040"/><path d="M14 7V14M11 10L14 6L17 10" stroke="#1a2a6a" stroke-width="2" fill="none"/><path d="M3 17H10M6.5 13.5V21" stroke="#1a2a6a" stroke-width="2.5"/></svg>
<svg style="position:absolute;left:456px;top:720px;" width="24" height="26" viewBox="0 0 24 26"><rect x="5" y="4" width="15" height="12" fill="#eee" stroke="#889"/><rect x="5" y="4" width="15" height="2" fill="#99b"/><rect x="10" y="12" width="10" height="9" fill="#f0c860" stroke="#c8a040"/><path d="M14 7V14M11 10L14 6L17 10" stroke="#1a2a6a" stroke-width="2" fill="none"/><path d="M3 13L11 21M11 13L3 21" stroke="#e22" stroke-width="2"/></svg>
<svg style="position:absolute;left:488px;top:720px;" width="24" height="26" viewBox="0 0 24 26"><rect x="4" y="4" width="10" height="9" fill="#8ab8d8" stroke="#335"/><rect x="6" y="6" width="2" height="2" fill="#e22"/><rect x="10" y="6" width="2" height="2" fill="#e22"/><rect x="7" y="10" width="8" height="8" fill="#4a78b8" stroke="#335"/><circle cx="16" cy="17" r="5.2" fill="none" stroke="#2a4a5a" stroke-width="2.2" stroke-dasharray="2.3 1.8"/><circle cx="16" cy="17" r="3.2" fill="none" stroke="#2a4a5a" stroke-width="2.4"/></svg>
<svg style="position:absolute;left:520px;top:720px;" width="24" height="26" viewBox="0 0 24 26"><path d="M11 6L4 13L11 20M19 6L12 13L19 20" stroke="#1a2a7a" stroke-width="1.9" fill="none"/></svg>
<div style="left:48px;top:182px;width:1px;height:573px;background:#6a7585"></div>
<div style="left:48px;top:754px;width:849px;height:1px;background:#6a7585"></div>
<div style="left:48px;top:151px;width:849px;height:31px;background:#687689"></div>
<svg style="position:absolute;left:876px;top:161px;" width="11" height="11" viewBox="0 0 11 11"><path d="M0.5 0.5L10.5 10.5M10.5 0.5L0.5 10.5" stroke="#fff" stroke-width="1.1"/></svg>
<div style="left:14px;top:45px;width:421px;height:665px;background:#f0f0f0"></div>
<div style="left:14px;top:45px;width:421px;height:665px;background:#f0f0f0"></div>
<div style="left:14px;top:45px;width:421px;height:31px;background:#687689"></div>
<div style="left:14px;top:75px;width:1px;height:635px;background:#6a7585"></div>
<div style="left:434px;top:75px;width:1px;height:635px;background:#6a7585"></div>
<div style="left:14px;top:709px;width:421px;height:1px;background:#6a7585"></div>
<svg style="position:absolute;left:23px;top:54px;" width="15" height="13" viewBox="0 0 15 13"><defs><linearGradient id="ig" x1="0" y1="0" x2="0.2" y2="1"><stop offset="0" stop-color="#3a80b8"/><stop offset="1" stop-color="#30b050"/></linearGradient></defs><rect x="0.5" y="0.5" width="14" height="11.5" fill="#ececec" stroke="#d8d8d8"/><rect x="2" y="2" width="6" height="9" fill="url(#ig)"/><rect x="9" y="2" width="2" height="9" fill="#d4d4d4"/><rect x="12" y="2" width="2" height="5" fill="url(#ig)"/></svg>
<div class="t" style="left:44px;top:55.31px;font-size:11.8px;line-height:11.8px;color:#fff;">Жорсткості та матеріали</div>
<svg style="position:absolute;left:413.5px;top:55px;" width="11" height="11" viewBox="0 0 11 11"><path d="M0.5 0.5L10.5 10.5M10.5 0.5L0.5 10.5" stroke="#fff" stroke-width="1.1"/></svg>
<div class="t" style="left:24px;top:82.69px;font-size:11px;line-height:11px;color:#000;">Призначити елементам схеми</div>
<div style="left:27px;top:98px;width:361px;height:48px;border:1px solid #dcdcdc;box-shadow:inset 1px 1px 0 #fff"></div>
<div style="left:33px;top:105px;width:11px;height:11px;background:#fff;border:1px solid #333"></div>
<svg style="position:absolute;left:33px;top:105px;" width="13" height="13" viewBox="0 0 13 13"><path d="M2.5 6.5L5 9.5L10.5 3" stroke="#333" stroke-width="1.3" fill="none"/></svg>
<div class="t" style="left:48.5px;top:106.69px;font-size:11px;line-height:11px;color:#000;">Жорсткість:</div>
<div style="left:53px;top:122px;width:319px;height:21px;background:#fff;border:1px solid #7a7a7a"></div>
<svg style="position:absolute;left:60px;top:127px;" width="12" height="12" viewBox="0 0 12 12"><rect x="0.5" y="0.5" width="11" height="11" fill="#fff" stroke="#000"/><path d="M1 5L5 1M1 9L9 1M3 11L11 3M7 11L11 7" stroke="#000" stroke-width="1.4"/></svg>
<div style="left:76px;top:128px;width:6px;height:11px;background:#1070b8"></div>
<div class="t" style="left:88px;top:126.69px;font-size:11px;line-height:11px;color:#000;">1. Брус 60 X 80</div>
<div style="left:396px;top:97px;width:28px;height:19px;background:#e1e1e1;border:1px solid #adadad;border-right-color:#777;border-bottom-color:#777"></div>
<div style="left:396px;top:119px;width:28px;height:19px;background:#e1e1e1;border:1px solid #adadad;border-right-color:#777;border-bottom-color:#777"></div>
<div style="left:396px;top:142px;width:28px;height:19px;background:#e1e1e1;border:1px solid #adadad;border-right-color:#777;border-bottom-color:#777"></div>
<div style="left:396px;top:165px;width:28px;height:19px;background:#e1e1e1;border:1px solid #adadad;border-right-color:#777;border-bottom-color:#777"></div>
<svg style="position:absolute;left:396px;top:97px;" width="30" height="21" viewBox="0 0 30 21"><path d="M10 11L14 15L22 5" stroke="#3a9a3a" stroke-width="2.6" fill="none"/><path d="M7 16h1M9 16h1M11 16h1" stroke="#333" stroke-width="1"/></svg>
<svg style="position:absolute;left:396px;top:119px;" width="30" height="21" viewBox="0 0 30 21"><path d="M8 4H22L16 11V18H14V11Z" fill="#e8e8e8" stroke="#444" stroke-width="1"/><path d="M10 5H20L15 10Z" fill="#e21"/></svg>
<svg style="position:absolute;left:396px;top:142px;" width="30" height="21" viewBox="0 0 30 21"><rect x="13" y="2" width="4" height="10" rx="2" fill="#2a9a4a"/><rect x="12" y="11" width="6" height="3" fill="#1a6a3a"/><path d="M11 14L10 19M13 14L12.5 19M15 14V19M17 14L17.5 19M19 14L20 19" stroke="#6a8a5a" stroke-width="0.9"/></svg>
<svg style="position:absolute;left:396px;top:165px;" width="30" height="21" viewBox="0 0 30 21"><path d="M10 2L17 13M20 2L13 13" stroke="#555" stroke-width="1.1"/><ellipse cx="11" cy="16" rx="2.8" ry="3" fill="none" stroke="#1a8fd0" stroke-width="2"/><ellipse cx="19" cy="16" rx="2.8" ry="3" fill="none" stroke="#1a8fd0" stroke-width="2"/></svg>
<div style="left:27px;top:155px;width:361px;height:99px;border:1px solid #dcdcdc;box-shadow:inset 1px 1px 0 #fff"></div>
<div style="left:33px;top:169px;width:11px;height:11px;background:#fff;border:1px solid #333"></div>
<div class="t" style="left:48.5px;top:170.69px;font-size:11px;line-height:11px;color:#000;">Матеріали:</div>
<div class="t" style="left:133px;top:170.69px;font-size:11px;line-height:11px;color:#000;">СНиП 2.03.01-84*</div>
<svg style="position:absolute;left:228px;top:175px;" width="8" height="5" viewBox="0 0 8 5"><path d="M0 0H8L4 4.5Z" fill="#000"/></svg>
<div class="t" style="left:259.5px;top:169.69px;font-size:11px;line-height:11px;color:#9a9a9a;">Вариант</div>
<div style="left:306px;top:164px;width:39px;height:19px;background:#f0f0f0;border:1px solid #ccc"></div>
<div class="t" style="left:312.5px;top:169.69px;font-size:11px;line-height:11px;color:#909090;">1</div>
<div style="left:329px;top:164px;width:1px;height:21px;background:#ddd"></div>
<div style="left:330px;top:174px;width:16px;height:1px;background:#ddd"></div>
<svg style="position:absolute;left:330px;top:165px;" width="16" height="19" viewBox="0 0 16 19"><path d="M5 6L8 3L11 6M5 13L8 16L11 13" stroke="#999" stroke-width="1" fill="none"/></svg>
<div style="left:355px;top:164px;width:23px;height:21px;background:#e1e1e1;border:1px solid #fff;outline:1px solid #bbb"></div>
<svg style="position:absolute;left:356px;top:165px;" width="22" height="21" viewBox="0 0 22 21"><path d="M9 3H13V9H19V13H13V19H9V13H3V9H9Z" fill="#4a3a8a" stroke="#2a1a5a" stroke-width="0.6"/></svg>
<div style="left:53px;top:191px;width:319px;height:58px;background:#f0f0f0;border:1px solid #7a7a7a"></div>
<div style="left:54px;top:192px;width:316px;height:17px;background:#f8f8f8;border-bottom:1px solid #e0e0e0"></div>
<div style="left:159px;top:193px;width:1px;height:15px;background:#dcdcdc"></div>
<div style="left:265px;top:193px;width:1px;height:15px;background:#dcdcdc"></div>
<div style="left:369px;top:193px;width:1px;height:15px;background:#dcdcdc"></div>
<div class="t" style="left:60.5px;top:195.69px;font-size:11px;line-height:11px;color:#000;">Тип:</div>
<div class="t" style="left:165px;top:195.69px;font-size:11px;line-height:11px;color:#000;">Бетон:</div>
<div class="t" style="left:270.5px;top:195.69px;font-size:11px;line-height:11px;color:#000;">Арматура:</div>
<div class="t" style="left:60.5px;top:213.19px;font-size:11px;line-height:11px;color:#000;">2. Оболонка (Ви...</div>
<div class="t" style="left:166.5px;top:213.19px;font-size:11px;line-height:11px;color:#000;">1. B20.</div>
<div class="t" style="left:271px;top:213.19px;font-size:11px;line-height:11px;color:#000;">1. A-<span style="font-family:Liberation Serif;font-size:12px;letter-spacing:0.3px">III</span>.A-<span style="font-family:Liberation Serif;font-size:12px;letter-spacing:0.3px">III</span>.A-<span style="font-family:Liberation Serif;font-size:12px;letter-spacing:0.3px">II</span>.</div>
<div style="left:27px;top:262px;width:362px;height:55px;border:1px solid #dcdcdc;box-shadow:inset 1px 1px 0 #fff"></div>
<div style="left:33px;top:271px;width:11px;height:11px;background:#fff;border:1px solid #333"></div>
<svg style="position:absolute;left:33px;top:271px;" width="13" height="13" viewBox="0 0 13 13"><path d="M2.5 6.5L5 9.5L10.5 3" stroke="#333" stroke-width="1.3" fill="none"/></svg>
<div class="t" style="left:48.5px;top:271.69px;font-size:11px;line-height:11px;color:#000;">Задане армування:</div>
<div style="left:306px;top:269px;width:28px;height:20px;background:#e1e1e1;border:1px solid #adadad;border-right-color:#777;border-bottom-color:#777"></div>
<svg style="position:absolute;left:306px;top:269px;" width="30" height="22" viewBox="0 0 30 22"><path d="M13 4H17V9H22V13H17V18H13V13H8V9H13Z" fill="#4a3a8a" stroke="#2a1a5a" stroke-width="0.6"/></svg>
<div style="left:343px;top:269px;width:28px;height:20px;background:#e1e1e1;border:1px solid #adadad;border-right-color:#777;border-bottom-color:#777"></div>
<svg style="position:absolute;left:343px;top:269px;" width="30" height="22" viewBox="0 0 30 22"><rect x="8" y="9" width="14" height="4" fill="#4a3a8a" stroke="#2a1a5a" stroke-width="0.6"/></svg>
<div style="left:53px;top:292px;width:318px;height:21px;background:#fff;border:1px solid #7a7a7a"></div>
<div class="t" style="left:59px;top:298.69px;font-size:11px;line-height:11px;color:#000;">4, 5, 6, 7</div>
<div style="left:21px;top:333px;width:68px;height:17px;background:#f0f0f0;border-left:1px solid #fff;border-top:1px solid #fff;border-right:2px solid #6a6a6a"></div>
<div class="t" style="left:25.5px;top:336.69px;font-size:11px;line-height:11px;color:#000;">Жорсткості</div>
<div style="left:93.5px;top:333px;width:37.0px;height:17px;background:#f0f0f0;border-left:1px solid #fff;border-top:1px solid #fff;border-right:2px solid #6a6a6a"></div>
<div class="t" style="left:13.5px;width:200px;text-align:center;top:336.69px;font-size:11px;line-height:11px;color:#000;">З/Б</div>
<div style="left:136px;top:333px;width:38px;height:17px;background:#f0f0f0;border-left:1px solid #fff;border-top:1px solid #fff;border-right:2px solid #6a6a6a"></div>
<div class="t" style="left:56.5px;width:200px;text-align:center;top:336.69px;font-size:11px;line-height:11px;color:#000;">Сталь</div>
<div style="left:179px;top:333px;width:44.5px;height:17px;background:#f0f0f0;border-left:1px solid #fff;border-top:1px solid #fff;border-right:2px solid #6a6a6a"></div>
<div class="t" style="left:102.75px;width:200px;text-align:center;top:336.69px;font-size:11px;line-height:11px;color:#000;">Кладка</div>
<div style="left:19px;top:350px;width:405px;height:329px;background:#f0f0f0;border-left:1px solid #fff;border-top:1px solid #fff;border-right:1px solid #707070;border-bottom:1px solid #707070"></div>
<div style="left:227px;top:331px;width:42px;height:20px;background:#f0f0f0;border-left:1px solid #fff;border-top:1px solid #fff;border-right:2px solid #6a6a6a"></div>
<div class="t" style="left:149.0px;width:200px;text-align:center;top:334.69px;font-size:11px;line-height:11px;color:#1a1ae0;">ТЗА</div>
<div style="left:393px;top:328px;width:26px;height:19px;background:#e1e1e1;border:1px solid #adadad;border-right-color:#777;border-bottom-color:#777"></div>
<svg style="position:absolute;left:393px;top:328px;" width="28" height="21" viewBox="0 0 28 21"><rect x="7" y="8" width="14" height="4" fill="#888"/><rect x="8" y="9" width="3" height="2" fill="#e44"/><rect x="11" y="9" width="3" height="2" fill="#ec4"/><rect x="14" y="9" width="3" height="2" fill="#4c4"/><rect x="17" y="9" width="3" height="2" fill="#48e"/></svg>
<div style="left:31px;top:362px;width:231px;height:272px;background:#fff;border:1px solid #828790"></div>
<div style="left:36px;top:365.5px;width:8px;height:13px;background:#c890d8"></div>
<div style="left:50px;top:366.5px;width:4px;height:9px;border:1px solid #000;background:#fff"></div>
<div class="t" style="left:57.5px;top:366.19px;font-size:11px;line-height:11px;color:#000;">-</div>
<div class="t" style="left:64px;top:366.19px;font-size:11px;line-height:11px;color:#000;">1. Всі стержні</div>
<div style="left:47px;top:380.5px;width:120px;height:16px;background:#eeeeee"></div>
<div style="left:36px;top:381.5px;width:8px;height:13px;background:#e8a05a"></div>
<div style="left:50px;top:382.5px;width:4px;height:9px;border:1px solid #000;background:#fff"></div>
<div class="t" style="left:57.5px;top:382.19px;font-size:11px;line-height:11px;color:#000;">-</div>
<div class="t" style="left:64px;top:382.19px;font-size:11px;line-height:11px;color:#000;">2. Всі нижні стержні</div>
<div style="left:36px;top:397.5px;width:8px;height:13px;background:#8a149a"></div>
<div style="left:50px;top:398.5px;width:4px;height:9px;border:1px solid #000;background:#fff"></div>
<div class="t" style="left:57.5px;top:398.19px;font-size:11px;line-height:11px;color:#000;">-</div>
<div class="t" style="left:64px;top:398.19px;font-size:11px;line-height:11px;color:#000;">3. Всі праві стержні</div>
<div style="left:36px;top:413.5px;width:8px;height:13px;background:#b0106e"></div>
<div style="left:50px;top:414.5px;width:4px;height:9px;border:1px solid #000;background:#fff"></div>
<div class="t" style="left:57.5px;top:414.19px;font-size:11px;line-height:11px;color:#000;">-</div>
<div class="t" style="left:64px;top:414.19px;font-size:11px;line-height:11px;color:#000;">4. Всі праві стержні</div>
<div style="left:47px;top:428.5px;width:120px;height:16px;background:#eeeeee"></div>
<div style="left:36px;top:429.5px;width:8px;height:13px;background:#00a0a8"></div>
<div style="left:50px;top:430.5px;width:4px;height:9px;border:1px solid #000;background:#fff"></div>
<div class="t" style="left:57.5px;top:430.19px;font-size:11px;line-height:11px;color:#000;">-</div>
<div class="t" style="left:64px;top:430.19px;font-size:11px;line-height:11px;color:#000;">5. Проміжні стержні</div>
<div style="left:36px;top:445.5px;width:8px;height:13px;background:#704050"></div>
<div style="left:50px;top:446.5px;width:4px;height:9px;border:1px solid #000;background:#fff"></div>
<div class="t" style="left:57.5px;top:446.19px;font-size:11px;line-height:11px;color:#000;">-</div>
<div class="t" style="left:64px;top:446.19px;font-size:11px;line-height:11px;color:#000;">6. Проміжні нижні стержні</div>
<div style="left:36px;top:461.5px;width:8px;height:13px;background:#704050"></div>
<div style="left:50px;top:462.5px;width:4px;height:9px;border:1px solid #000;background:#fff"></div>
<div class="t" style="left:57.5px;top:462.19px;font-size:11px;line-height:11px;color:#000;">-</div>
<div class="t" style="left:64px;top:462.19px;font-size:11px;line-height:11px;color:#000;">7. Проміжні нижні стержні</div>
<div style="left:36px;top:477.5px;width:8px;height:13px;background:#e0a890"></div>
<div style="left:50px;top:478.5px;width:4px;height:9px;border:1px solid #000;background:#fff"></div>
<div class="t" style="left:57.5px;top:478.19px;font-size:11px;line-height:11px;color:#000;">-</div>
<div class="t" style="left:64px;top:478.19px;font-size:11px;line-height:11px;color:#000;">8. Комбінований прототип прямокутно</div>
<div style="left:36px;top:493.5px;width:8px;height:13px;background:#704870"></div>
<div style="left:50px;top:494.5px;width:4px;height:9px;border:1px solid #000;background:#fff"></div>
<div class="t" style="left:57px;top:494.19px;font-size:11px;line-height:11px;color:#000;">+</div>
<div class="t" style="left:65px;top:494.19px;font-size:11px;line-height:11px;color:#000;">9. Составний тип прямокутного перер</div>
<div style="left:36px;top:509.5px;width:8px;height:13px;background:#10e010"></div>
<div style="left:50px;top:510.5px;width:4px;height:9px;border:1px solid #000;background:#fff"></div>
<div class="t" style="left:57.5px;top:510.19px;font-size:11px;line-height:11px;color:#000;">-</div>
<div class="t" style="left:64px;top:510.19px;font-size:11px;line-height:11px;color:#000;">10. Всі стержні</div>
<div style="left:33px;top:616px;width:228px;height:17px;background:#fff"></div>
<div style="left:50.5px;top:617px;width:139px;height:15px;background:#dadada"></div>
<svg style="position:absolute;left:33px;top:616px;" width="17" height="17" viewBox="0 0 17 17"><path d="M10 5L6.5 8.5L10 12" stroke="#555" stroke-width="1.2" fill="none"/></svg>
<svg style="position:absolute;left:245px;top:616px;" width="17" height="17" viewBox="0 0 17 17"><path d="M7 5L10.5 8.5L7 12" stroke="#555" stroke-width="1.2" fill="none"/></svg>
<div style="left:245px;top:617px;width:1px;height:15px;background:#dcdcdc"></div>
<div style="left:50px;top:617px;width:1px;height:15px;background:#dcdcdc"></div>
<svg style="position:absolute;left:113px;top:619px;" width="14" height="10" viewBox="0 0 14 10"><path d="M3 1V9M6 1V9M9 1V9" stroke="#555" stroke-width="1"/></svg>
<div style="left:278px;top:363px;width:96px;height:19px;background:#e1e1e1;border:1px solid #adadad;border-right-color:#777;border-bottom-color:#777"></div>
<div class="t" style="left:227.0px;width:200px;text-align:center;top:368.69px;font-size:11px;line-height:11px;color:#000;">Редагувати...</div>
<div style="left:278px;top:389px;width:96px;height:18px;background:#e1e1e1;border:1px solid #adadad;border-right-color:#777;border-bottom-color:#777"></div>
<div class="t" style="left:227.0px;width:200px;text-align:center;top:393.69px;font-size:11px;line-height:11px;color:#000;">Видалити</div>
<div style="left:278px;top:416px;width:108px;height:135px;background:#fff;border:1px solid #a0a0a0"></div>
<div style="left:296px;top:432px;width:64px;height:97px;background:#f6f6f6;border:1.5px solid #000"></div>
<svg style="position:absolute;left:280px;top:420px;" width="100" height="120" viewBox="0 0 100 120"><rect x="18" y="14" width="6" height="6" transform="rotate(45 21 17)" fill="#10a0a0"/><rect x="37" y="14" width="6" height="6" transform="rotate(45 40 17)" fill="#10a0a0"/><rect x="55" y="14" width="6" height="6" transform="rotate(45 58 17)" fill="#10a0a0"/><rect x="74" y="14" width="6" height="6" transform="rotate(45 77 17)" fill="#10a0a0"/><rect x="18" y="44" width="6" height="6" transform="rotate(45 21 47)" fill="#10a0a0"/><rect x="74" y="44" width="6" height="6" transform="rotate(45 77 47)" fill="#10a0a0"/><rect x="18" y="72" width="6" height="6" transform="rotate(45 21 75)" fill="#10a0a0"/><rect x="74" y="72" width="6" height="6" transform="rotate(45 77 75)" fill="#10a0a0"/><rect x="21" y="98" width="6" height="6" transform="rotate(45 24 101)" fill="#e8a05a"/><rect x="38" y="98" width="6" height="6" transform="rotate(45 41 101)" fill="#e8a05a"/><rect x="55" y="98" width="6" height="6" transform="rotate(45 58 101)" fill="#e8a05a"/><rect x="70" y="98" width="6" height="6" transform="rotate(45 73 101)" fill="#e8a05a"/><rect x="18" y="102" width="6" height="6" transform="rotate(45 21 105)" fill="#10a0a0"/><rect x="37" y="102" width="6" height="6" transform="rotate(45 40 105)" fill="#10a0a0"/><rect x="55" y="102" width="6" height="6" transform="rotate(45 58 105)" fill="#10a0a0"/><rect x="74" y="102" width="6" height="6" transform="rotate(45 77 105)" fill="#10a0a0"/><path d="M49 57V66M45 61H53" stroke="#1a3ac0" stroke-width="1.2"/><path d="M47 58a2 2 0 1 1 4 0" stroke="#e01010" stroke-width="1" fill="none"/><path d="M49 58V66" stroke="#e01010" stroke-width="1"/></svg>
<div style="left:278px;top:561px;width:23px;height:19px;background:#e1e1e1;border:1px solid #adadad;border-right-color:#777;border-bottom-color:#777"></div>
<svg style="position:absolute;left:278px;top:561px;" width="25" height="21" viewBox="0 0 25 21"><path d="M13 7.5L6.5 11L13 14.5M21 7.5L14.5 11L21 14.5" stroke="#111" stroke-width="1.3" fill="none"/></svg>
<div style="left:306px;top:561px;width:23px;height:19px;background:#e1e1e1;border:1px solid #adadad;border-right-color:#777;border-bottom-color:#777"></div>
<svg style="position:absolute;left:306px;top:561px;" width="25" height="21" viewBox="0 0 25 21"><path d="M5 7.5L11.5 11L5 14.5M13 7.5L19.5 11L13 14.5" stroke="#111" stroke-width="1.3" fill="none"/></svg>
<div style="left:278px;top:585px;width:23px;height:20px;background:#e1e1e1;border:1px solid #adadad;border-right-color:#777;border-bottom-color:#777"></div>
<svg style="position:absolute;left:278px;top:585px;" width="25" height="22" viewBox="0 0 25 22"><path d="M5 4L5 14L8 11L10 15L11.5 14.5L9.5 10.5L13 10.5Z" fill="#333"/><path d="M11 10H21L17 15V19H15V15Z" fill="#e8f4f8" stroke="#1a6a8a" stroke-width="1"/></svg>
<div style="left:306px;top:585px;width:23px;height:20px;background:#e1e1e1;border:1px solid #adadad;border-right-color:#777;border-bottom-color:#777"></div>
<svg style="position:absolute;left:306px;top:585px;" width="25" height="22" viewBox="0 0 25 22"><path d="M6 4L11 8H6Z" fill="#8a8a10"/><path d="M7 8V17M5 11L7 8L9 11" stroke="#a01010" stroke-width="1" fill="none"/><path d="M5 17H20M9 14H19M9 11H16" stroke="#b0a020" stroke-width="1.3"/></svg>
<div style="left:278px;top:612px;width:23px;height:19px;background:#e1e1e1;border:1px solid #adadad;border-right-color:#777;border-bottom-color:#777"></div>
<div class="t" style="left:282px;top:616.15px;font-size:14px;line-height:14px;color:#000;">№</div>
<div style="left:306px;top:612px;width:23px;height:19px;background:#e1e1e1;border:1px solid #adadad;border-right-color:#777;border-bottom-color:#777"></div>
<svg style="position:absolute;left:306px;top:612px;" width="25" height="21" viewBox="0 0 25 21"><path d="M6 7H9V13H6M13 7H17M13 13H17M15 7V13M19 7H22M19 13H22M21 7V13M19 10H21" stroke="#1a1ae0" stroke-width="1.8" fill="none"/></svg>
<div style="left:333px;top:612px;width:23px;height:19px;background:#e1e1e1;border:1px solid #adadad;border-right-color:#777;border-bottom-color:#777"></div>
<div class="t" style="left:339px;top:615.00px;font-size:13px;line-height:13px;color:#000;">-+·</div>
<div class="t" style="left:48.0px;width:200px;text-align:center;top:644.69px;font-size:11px;line-height:11px;color:#000;">Призначити поточним</div>
<div style="left:32px;top:641px;width:229px;height:16px;background:#e1e1e1;border:1px solid #adadad;border-right-color:#777;border-bottom-color:#777"></div>
<div class="t" style="left:47.0px;width:200px;text-align:center;top:644.69px;font-size:11px;line-height:11px;color:#000;">Призначити поточним</div>
<div style="left:33px;top:691px;width:11px;height:11px;background:#fff;border:1px solid #333"></div>
<div class="t" style="left:48.5px;top:692.69px;font-size:11px;line-height:11px;color:#000;">Список для фрагмента</div>
<div style="left:270px;top:682px;width:27px;height:19px;background:#e1e1e1;border:1px solid #adadad;border-right-color:#777;border-bottom-color:#777"></div>
<div style="left:304px;top:682px;width:27px;height:19px;background:#e1e1e1;border:1px solid #adadad;border-right-color:#777;border-bottom-color:#777"></div>
<div style="left:337.5px;top:682px;width:27px;height:19px;background:#e1e1e1;border:1px solid #adadad;border-right-color:#777;border-bottom-color:#777"></div>
<svg style="position:absolute;left:270px;top:682px;" width="29" height="21" viewBox="0 0 29 21"><path d="M9 4H17L19 6V16H9Z" fill="#dde8f8" stroke="#335" stroke-width="0.9"/><path d="M12 7H20L22 9V19H12Z" fill="#c8d8f0" stroke="#1a2a7a" stroke-width="1"/></svg>
<svg style="position:absolute;left:304px;top:682px;" width="29" height="21" viewBox="0 0 29 21"><path d="M7 4H16V13H7Z" fill="#e0c890" stroke="#555" stroke-width="0.9"/><path d="M11 8H20L22 10V19H11Z" fill="#e8e8f8" stroke="#334" stroke-width="0.9"/><path d="M8 5L14 11M11 11H14V8" stroke="#222" stroke-width="1.3" fill="none"/></svg>
<svg style="position:absolute;left:337.5px;top:682px;" width="29" height="21" viewBox="0 0 29 21"><text x="10" y="16" font-family="Liberation Serif" font-weight="bold" font-size="15" fill="#2a8a2a">?</text></svg>
<svg style="position:absolute;left:417px;top:692px;" width="12" height="12" viewBox="0 0 12 12"><path d="M11 1L1 11M11 5L5 11M11 9L9 11" stroke="#666" stroke-width="1.2"/></svg>
</body></html>
